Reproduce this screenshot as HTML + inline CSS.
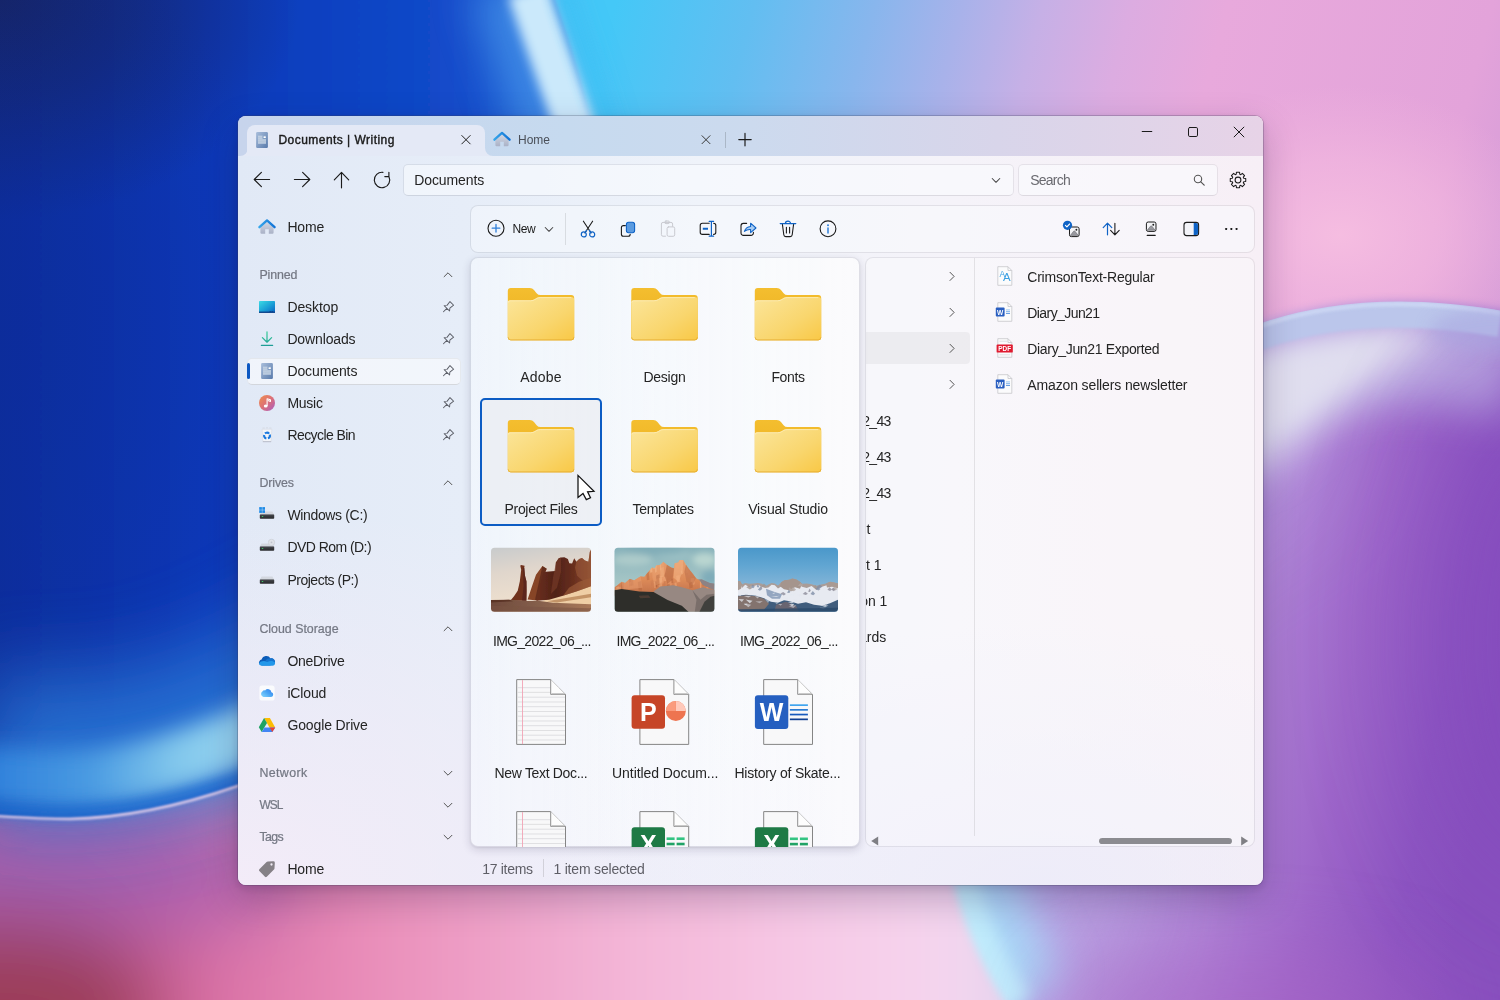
<!DOCTYPE html>
<html lang="en">
<head>
<meta charset="utf-8">
<title>Files</title>
<style>
*{box-sizing:border-box;margin:0;padding:0}
html,body{width:1500px;height:1000px;overflow:hidden;background:#1038b0;font-family:"Liberation Sans","DejaVu Sans",sans-serif;color:#1b1b1b}
#bg{position:absolute;left:0;top:0;width:1500px;height:1000px;display:block}

#win{will-change:transform;position:absolute;left:238px;top:116px;width:1025px;height:769px;border-radius:8px;overflow:hidden;
 background:
  linear-gradient(90deg,#e1e9f6 0%,#e6edf8 22%,#eff3fa 45%,#f5f3f9 70%,#f7eff6 100%);
 box-shadow:0 0 0 1px rgba(60,60,90,.26),0 14px 36px rgba(30,15,60,.26),0 3px 10px rgba(30,15,60,.14)}
#win .tint{position:absolute;left:0;top:0;width:1025px;height:769px;
 background:radial-gradient(ellipse 520px 260px at 78% 100%,rgba(236,235,249,.85),rgba(236,235,249,0) 100%),radial-gradient(ellipse 640px 380px at 0% 100%,rgba(244,236,248,.95),rgba(244,236,248,0) 100%)}
#titlebar{position:absolute;left:0;top:0;width:1025px;height:39.6px;
 background:linear-gradient(90deg,#c7d4ec 0%,#c6daef 32%,#ccdaee 50%,#d8d5ea 74%,#e7d3e7 100%)}
.abs{position:absolute}
.t14{font-size:14px;line-height:18px;white-space:nowrap;color:#242424}
.t13{font-size:13px;line-height:16px;white-space:nowrap;color:#1a1a1a}
.muted{color:#6f6f76}
#tab1{position:absolute;left:9px;top:9px;width:238px;height:31px;border-radius:8px 8px 0 0;background:#e4e9f6}
.card{background-clip:padding-box !important;position:absolute;background:rgba(250,253,255,.42);border:1px solid rgba(0,0,20,.075);border-radius:8px}
.field{background-clip:padding-box !important;position:absolute;background:rgba(252,254,255,.50);border:1px solid rgba(0,0,20,.065);border-bottom-color:rgba(0,0,20,.10);border-radius:5px}
svg{overflow:visible}
.t12{font-size:12px;line-height:16px;white-space:nowrap}
.t125{font-size:12.4px;line-height:16px;white-space:nowrap}
</style>
</head>
<body>
<!-- ===== WALLPAPER ===== -->
<svg id="bg" viewBox="0 0 1500 1000">
<defs>
  <linearGradient id="gTop" gradientUnits="userSpaceOnUse" x1="0" y1="0" x2="1500" y2="400">
    <stop offset="0.0100" stop-color="#44c8f7"/>
    <stop offset="0.3834" stop-color="#44c8f7"/>
    <stop offset="0.4700" stop-color="#62bef1"/>
    <stop offset="0.5450" stop-color="#88b6ed"/>
    <stop offset="0.6000" stop-color="#a8b2ea"/>
    <stop offset="0.6500" stop-color="#c6b0e6"/>
    <stop offset="0.7050" stop-color="#dcace1"/>
    <stop offset="0.7650" stop-color="#e8a9dc"/>
    <stop offset="0.9300" stop-color="#e3a3da"/>
    <stop offset="1" stop-color="#d29ad8"/>
  </linearGradient>
  <linearGradient id="gBlue" x1="0" y1="0" x2="1" y2="0">
    <stop offset="0" stop-color="#0d2c9a"/>
    <stop offset="0.35" stop-color="#0c38b8"/>
    <stop offset="0.7" stop-color="#1148c8"/>
    <stop offset="1" stop-color="#1a64d8"/>
  </linearGradient>
  <linearGradient id="gBottom" x1="0" y1="0" x2="1" y2="0">
    <stop offset="0" stop-color="#b24a7c"/>
    <stop offset="0.13" stop-color="#d0609a"/>
    <stop offset="0.27" stop-color="#e98cb8"/>
    <stop offset="0.42" stop-color="#f3b4d6"/>
    <stop offset="0.55" stop-color="#f7cce8"/>
    <stop offset="0.64" stop-color="#f3d8f0"/>
    <stop offset="0.70" stop-color="#b4c4ec"/>
    <stop offset="0.78" stop-color="#b088d6"/>
    <stop offset="0.88" stop-color="#9c5cc4"/>
    <stop offset="1" stop-color="#8a50c0"/>
  </linearGradient>
  <linearGradient id="gRight" gradientUnits="userSpaceOnUse" x1="1050" y1="600" x2="1500" y2="680">
    <stop offset="0" stop-color="#b6a6e6"/>
    <stop offset="0.22" stop-color="#b696dc"/>
    <stop offset="0.46" stop-color="#ae82d5"/>
    <stop offset="0.68" stop-color="#9d66c9"/>
    <stop offset="0.88" stop-color="#8c54c1"/>
    <stop offset="1" stop-color="#8850be"/>
  </linearGradient>
  <filter id="b2" filterUnits="userSpaceOnUse" x="-300" y="-300" width="2100" height="1600"><feGaussianBlur stdDeviation="1.6"/></filter>
  <radialGradient id="rgPink"><stop offset="0" stop-color="#f6bee1" stop-opacity="0.95"/><stop offset="0.5" stop-color="#f4bae0" stop-opacity="0.6"/><stop offset="1" stop-color="#f2b6de" stop-opacity="0"/></radialGradient>
  <radialGradient id="rgNavy"><stop offset="0" stop-color="#17235f" stop-opacity="0.9"/><stop offset="0.45" stop-color="#17235f" stop-opacity="0.55"/><stop offset="1" stop-color="#17235f" stop-opacity="0"/></radialGradient>
  <radialGradient id="rgLeft"><stop offset="0" stop-color="#0b2a98" stop-opacity="0.42"/><stop offset="0.5" stop-color="#0b2a98" stop-opacity="0.2"/><stop offset="1" stop-color="#0b2a98" stop-opacity="0"/></radialGradient>
  <filter id="b1" filterUnits="userSpaceOnUse" x="-300" y="-300" width="2100" height="1600"><feGaussianBlur stdDeviation="0.9"/></filter>
  <filter id="b12" filterUnits="userSpaceOnUse" x="-300" y="-300" width="2100" height="1600"><feGaussianBlur stdDeviation="11"/></filter>
  <filter id="b6" filterUnits="userSpaceOnUse" x="-300" y="-300" width="2100" height="1600"><feGaussianBlur stdDeviation="5.5"/></filter>
  <filter id="b8" filterUnits="userSpaceOnUse" x="-300" y="-300" width="2100" height="1600"><feGaussianBlur stdDeviation="8"/></filter>
  <filter id="b4" filterUnits="userSpaceOnUse" x="-300" y="-300" width="2100" height="1600"><feGaussianBlur stdDeviation="4"/></filter>
  <filter id="b20" filterUnits="userSpaceOnUse" x="-300" y="-300" width="2100" height="1600"><feGaussianBlur stdDeviation="20"/></filter>
  <filter id="b40" filterUnits="userSpaceOnUse" x="-300" y="-300" width="2100" height="1600"><feGaussianBlur stdDeviation="40"/></filter>
  <filter id="b70" filterUnits="userSpaceOnUse" x="-300" y="-300" width="2100" height="1600"><feGaussianBlur stdDeviation="70"/></filter>
</defs>
<!-- sky / top gradient -->
<rect x="0" y="0" width="1500" height="1000" fill="url(#gTop)"/>
<ellipse cx="1340" cy="235" rx="210" ry="150" fill="url(#rgPink)"/>
<!-- lower pink field -->
<g filter="url(#b40)">
  <rect x="-100" y="760" width="1700" height="340" fill="url(#gBottom)"/>
  <ellipse cx="60" cy="875" rx="240" ry="60" fill="#a65eae"/>
  <ellipse cx="0" cy="1010" rx="170" ry="90" fill="#9c3c58"/>
</g>
<!-- right purple glass body -->
<clipPath id="cpGlass"><path d="M1010,1010 C952,925 920,800 944,650 C976,470 1120,360 1263,322.5 C1320,303 1400,293 1500,310.5 V1010 Z"/></clipPath>
<mask id="mGlass" maskUnits="userSpaceOnUse" x="800" y="200" width="800" height="900"><path d="M1010,1010 C952,925 920,800 944,650 C976,470 1120,360 1263,322.5 C1320,303 1400,293 1500,310.5 L1600,310 V1100 H1010 Z" fill="#fff" filter="url(#b4)"/></mask>
<g mask="url(#mGlass)">
  <rect x="880" y="260" width="640" height="760" fill="url(#gRight)"/>
  <!-- inner left/bottom edge glow -->
  <path d="M1010,1010 C952,925 920,800 944,650 C976,470 1120,360 1263,322.5" fill="none" stroke="#b9a4e4" stroke-width="300" filter="url(#b70)" opacity="0.9"/>
  <path d="M1010,1010 C952,925 920,800 944,650" fill="none" stroke="#a9d4f6" stroke-width="130" filter="url(#b20)"/>
  <path d="M1010,1010 C952,925 920,800 944,650" fill="none" stroke="#bfeafb" stroke-width="50" filter="url(#b8)"/>
  <!-- soft light patch under the rim -->
  <path d="M1150,420 C1210,392 1263,376 1320,362 C1400,346 1450,348 1520,368" fill="none" stroke="#b8a6e0" stroke-width="110" filter="url(#b20)" opacity="0.9"/>
  <path d="M1200,372 C1270,345 1360,328 1470,332 C1410,352 1350,392 1300,440 C1270,470 1240,480 1200,470Z" fill="#dedcef" filter="url(#b20)"/>
  <path d="M1230,372 C1290,350 1350,336 1430,334 C1385,352 1340,380 1300,412 C1280,428 1250,436 1230,426Z" fill="#e0deef" filter="url(#b12)"/>
  <ellipse cx="1560" cy="640" rx="120" ry="260" fill="#8349bd" opacity="0.6" filter="url(#b70)"/>
  <ellipse cx="1250" cy="1010" rx="200" ry="60" fill="#a862c4" opacity="0.5" filter="url(#b40)"/>
</g>
<g clip-path="url(#cpGlass)">
  <!-- rim -->
  <path d="M1100,400 C1160,366 1210,346 1263,335.5 C1320,316 1400,306 1500,323.5" fill="none" stroke="#bbc6eb" stroke-width="27" filter="url(#b2)"/>
  <path d="M1100,390 C1160,356 1210,336 1263,325 C1320,305.5 1400,295.5 1500,313" fill="none" stroke="#cdd8f4" stroke-width="5" filter="url(#b2)" opacity="0.9"/>
  <ellipse cx="1500" cy="330" rx="70" ry="22" fill="#a9a6e0" opacity="0.55" filter="url(#b8)"/>
</g>
<!-- big blue sphere on the left -->
<linearGradient id="gGlow" gradientUnits="userSpaceOnUse" x1="-20" y1="0" x2="300" y2="0">
  <stop offset="0" stop-color="#2d7edb"/><stop offset="0.35" stop-color="#4a9be2"/><stop offset="0.62" stop-color="#83c8ec"/><stop offset="0.8" stop-color="#93d2f0"/><stop offset="1" stop-color="#7cc0ea"/>
</linearGradient>
<g>
  <path d="M-20,-20 L548,-20 C585,80 640,260 600,470 C560,640 420,740 238,786 C180,806 120,818 70,819 C40,819 10,817 -20,815Z" fill="url(#gBlue)" filter="url(#b2)"/>
  <ellipse cx="0" cy="0" rx="300" ry="220" fill="url(#rgNavy)"/>
  <ellipse cx="20" cy="330" rx="260" ry="440" fill="url(#rgLeft)"/>
  <!-- bottom glow -->
  <path d="M-20,760 C10,763 40,765 70,765 C120,764 175,751 228,730 C285,706 330,680 375,648" fill="none" stroke="#2a78d6" stroke-width="150" filter="url(#b40)" opacity="0.85" transform="translate(0,-12)"/>
  <path d="M-20,774 C10,777 40,779 70,779 C120,778 175,764 228,743 C285,720 330,694 375,662" fill="none" stroke="url(#gGlow)" stroke-width="58" filter="url(#b12)"/>
  <path d="M-20,815 C10,817 40,819 70,819 C120,818 180,806 238,786 C300,764 350,736 400,700" fill="none" stroke="#1f6fd2" stroke-width="12" filter="url(#b4)" opacity="0.55" transform="translate(-2,-7)"/>
  <path d="M-20,815 C10,817 40,819 70,819 C120,818 180,806 238,786 C300,764 350,736 400,700" fill="none" stroke="#ecd0ea" stroke-width="2.4" filter="url(#b1)" opacity="0.95"/>
  <!-- top rim light -->
  <path d="M508,-20 C530,50 552,110 572,180" fill="none" stroke="#4a96ea" stroke-width="80" filter="url(#b20)" opacity="0.75"/>
  <path d="M528,-10 C546,45 567,100 591,170" fill="none" stroke="#cbe9fb" stroke-width="42" filter="url(#b6)"/>
  <path d="M562,-10 C580,45 600,100 622,170" fill="none" stroke="#3cc8f6" stroke-width="14" filter="url(#b8)" opacity="0.8"/>
</g>
</svg>
<!-- ===== WINDOW ===== -->
<div id="win">
<div class="tint"></div>
<div id="titlebar"></div>
<svg width="0" height="0" style="position:absolute"><defs>
<linearGradient id="gHome" x1="0" y1="0" x2="0" y2="1"><stop offset="0" stop-color="#d9dee9"/><stop offset="1" stop-color="#a9b1c6"/></linearGradient>
<linearGradient id="gRoof" x1="0" y1="0" x2="1" y2="0"><stop offset="0" stop-color="#35a5ea"/><stop offset="1" stop-color="#1273d6"/></linearGradient>
<linearGradient id="gDesk" x1="0" y1="0" x2="1" y2="1"><stop offset="0" stop-color="#3bdbe4"/><stop offset="0.55" stop-color="#1a9fd6"/><stop offset="1" stop-color="#0a63c2"/></linearGradient>
<linearGradient id="gDoc" x1="0" y1="0" x2="1" y2="1"><stop offset="0" stop-color="#a9bedb"/><stop offset="1" stop-color="#587aab"/></linearGradient>
<linearGradient id="gMus" x1="0" y1="0" x2="1" y2="1"><stop offset="0" stop-color="#f0904c"/><stop offset="0.5" stop-color="#dc7078"/><stop offset="1" stop-color="#a85cc4"/></linearGradient>
<linearGradient id="gDl" x1="0" y1="0" x2="0" y2="1"><stop offset="0" stop-color="#3ccf9a"/><stop offset="1" stop-color="#1f9e96"/></linearGradient>
<linearGradient id="gOD" x1="0" y1="0" x2="1" y2="1"><stop offset="0" stop-color="#1a7fe0"/><stop offset="1" stop-color="#0a4fb0"/></linearGradient>
<linearGradient id="gIC" x1="0" y1="1" x2="1" y2="0.2"><stop offset="0" stop-color="#86d8fd"/><stop offset="0.6" stop-color="#49a4f4"/><stop offset="1" stop-color="#3a84ee"/></linearGradient>
<linearGradient id="gFold" x1="0" y1="0" x2="1" y2="1"><stop offset="0" stop-color="#fbe59a"/><stop offset="0.6" stop-color="#f9d66e"/><stop offset="1" stop-color="#f9c846"/></linearGradient>
<linearGradient id="gFoldB" x1="0" y1="0" x2="0" y2="1"><stop offset="0" stop-color="#f4be2f"/><stop offset="1" stop-color="#e9ad1c"/></linearGradient>
<linearGradient id="gDrive" x1="0" y1="0" x2="0" y2="1"><stop offset="0" stop-color="#6a6c72"/><stop offset="0.3" stop-color="#3a3c40"/><stop offset="1" stop-color="#2a2b2e"/></linearGradient>
</defs></svg>
<div id="tab1"></div>
<svg class="abs" style="left:1px;top:32px" width="9" height="8" viewBox="0 0 9 8"><path d="M9,0 V8 H1 A8,8 0 0 0 9,0Z" fill="#e4e9f6"/></svg>
<svg class="abs" style="left:247px;top:32px" width="9" height="8" viewBox="0 0 9 8"><path d="M0,0 V8 H8 A8,8 0 0 1 0,0Z" fill="#e4e9f6"/></svg>
<svg class="abs" style="left:12px;top:12px" width="24" height="24" viewBox="-12.00 -12.00 24 24" ><rect x="-5.9" y="-7.9" width="11.8" height="15.8" rx="1.2" fill="url(#gDoc)"/><rect x="-4.0" y="-4.4" width="8.0" height="8.2" fill="#c6d3e4" opacity="0.85"/><path d="M-4,-2.4 H4 M-4,-0.4 H4 M-4,1.6 H4" stroke="#b0c1d8" stroke-width="0.5"/><rect x="0.6" y="-4.4" width="3.4" height="3.2" fill="#7292bd"/><rect x="1.5" y="-3.7" width="2.3" height="1.7" fill="#fff"/></svg>
<div class="abs t12" style="left:40.40px;top:16.20px;font-weight:400;color:#1a1a1a;-webkit-text-stroke:0.4px #1a1a1a;letter-spacing:0.467px;font-size:12px">Documents | Writing</div>
<svg class="abs" style="left:216px;top:11px" width="24" height="24" viewBox="-12.00 -12.70 24 24" ><path d="M-4.2,-4.2 L4.2,4.2 M4.2,-4.2 L-4.2,4.2" fill="none" stroke="#222" stroke-width="1.0" stroke-linecap="round" stroke-linejoin="round" /></svg>
<svg class="abs" style="left:252px;top:11px" width="24" height="24" viewBox="-12.00 -12.50 24 24" ><path d="M-6.6,-1.6 L0,-7.2 L6.6,-1.6 V5.6 A1.2,1.2 0 0 1 5.4,6.8 H1.8 V2.2 H-1.8 V6.8 H-5.4 A1.2,1.2 0 0 1 -6.6,5.6 Z" fill="url(#gHome)"/><path d="M-7.6,0.2 L0,-6.6 L7.6,0.2" fill="none" stroke="url(#gRoof)" stroke-width="2.3" stroke-linecap="round" stroke-linejoin="round"/></svg>
<div class="abs t12" style="left:280.00px;top:16.20px;color:#4a4f58;letter-spacing:-0.003px;font-size:12px">Home</div>
<svg class="abs" style="left:456px;top:11px" width="24" height="24" viewBox="-12.00 -12.70 24 24" ><path d="M-4,-4 L4,4 M4,-4 L-4,4" fill="none" stroke="#3a3a3a" stroke-width="1.0" stroke-linecap="round" stroke-linejoin="round" /></svg>
<div class="abs" style="left:487px;top:16px;width:1px;height:16px;background:rgba(0,0,0,.16)"></div>
<svg class="abs" style="left:495px;top:11px" width="24" height="24" viewBox="-12.00 -12.60 24 24" ><path d="M-6.2,0 H6.2 M0,-6.2 V6.2" fill="none" stroke="#1b1b1b" stroke-width="1.2" stroke-linecap="round" stroke-linejoin="round" /></svg>
<svg class="abs" style="left:897px;top:3px" width="24" height="24" viewBox="-12.00 -12.50 24 24" ><path d="M-4.8,0 H4.8" fill="none" stroke="#1b1b1b" stroke-width="1.0" stroke-linecap="round" stroke-linejoin="round" /></svg>
<svg class="abs" style="left:943px;top:4px" width="24" height="24" viewBox="-12.00 -12.00 24 24" ><rect x="-4.5" y="-4.5" width="9" height="9" rx="1.3" fill="none" stroke="#1b1b1b" stroke-width="1.0" stroke-linecap="round" stroke-linejoin="round" /></svg>
<svg class="abs" style="left:989px;top:4px" width="24" height="24" viewBox="-12.00 -12.00 24 24" ><path d="M-4.9,-4.9 L4.9,4.9 M4.9,-4.9 L-4.9,4.9" fill="none" stroke="#1b1b1b" stroke-width="1.0" stroke-linecap="round" stroke-linejoin="round" /></svg>
<svg class="abs" style="left:12px;top:51px" width="24" height="24" viewBox="-12.00 -12.50 24 24" ><path d="M7.6,0 H-7.6 M-0.6,-7.2 L-7.8,0 L-0.6,7.2" fill="none" stroke="#1b1b1b" stroke-width="1.15" stroke-linecap="round" stroke-linejoin="round" /></svg>
<svg class="abs" style="left:52px;top:51px" width="24" height="24" viewBox="-12.00 -12.50 24 24" ><path d="M-7.6,0 H7.6 M0.6,-7.2 L7.8,0 L0.6,7.2" fill="none" stroke="#1b1b1b" stroke-width="1.15" stroke-linecap="round" stroke-linejoin="round" /></svg>
<svg class="abs" style="left:91px;top:52px" width="24" height="24" viewBox="-12.50 -12.00 24 24" ><path d="M0,7.8 V-7.4 M-7.2,-0.2 L0,-7.6 L7.2,-0.2" fill="none" stroke="#1b1b1b" stroke-width="1.15" stroke-linecap="round" stroke-linejoin="round" /></svg>
<svg class="abs" style="left:132px;top:52px" width="24" height="24" viewBox="-12.00 -12.00 24 24" ><path d="M0.9,-7.65 A7.7,7.7 0 1 0 6.9,-3.4 M6.9,-7.7 V-3.4 H2.8" fill="none" stroke="#1b1b1b" stroke-width="1.15" stroke-linecap="round" stroke-linejoin="round" /></svg>
<div class="field" style="left:165px;top:48px;width:611px;height:32px"></div>
<div class="abs t14" style="left:176.20px;top:55.30px;;letter-spacing:-0.101px;font-size:14px">Documents</div>
<svg class="abs" style="left:746px;top:52px" width="24" height="24" viewBox="-12.00 -12.40 24 24" ><path d="M-3.8,-1.9 L0,1.9 L3.8,-1.9" fill="none" stroke="#444" stroke-width="1.05" stroke-linecap="round" stroke-linejoin="round" /></svg>
<div class="field" style="left:780px;top:48px;width:200px;height:32px"></div>
<div class="abs t14" style="left:792.20px;top:55.30px;color:#6a6a70;letter-spacing:-0.752px;font-size:14px">Search</div>
<svg class="abs" style="left:949px;top:52px" width="24" height="24" viewBox="-12.00 -12.00 24 24" ><circle cx="-1" cy="-1" r="3.7" fill="none" stroke="#555" stroke-width="1.1" stroke-linecap="round" stroke-linejoin="round" /><path d="M1.8,1.8 L5.2,5.2" fill="none" stroke="#555" stroke-width="1.2" stroke-linecap="round" stroke-linejoin="round" /></svg>
<svg class="abs" style="left:988px;top:52px" width="24" height="24" viewBox="-12.00 -12.00 24 24" ><path d="M-1.77,-5.73 L-1.57,-7.74 L1.57,-7.74 L1.77,-5.73 L2.80,-5.31 L4.36,-6.58 L6.58,-4.36 L5.31,-2.80 L5.73,-1.77 L7.74,-1.57 L7.74,1.57 L5.73,1.77 L5.31,2.80 L6.58,4.36 L4.36,6.58 L2.80,5.31 L1.77,5.73 L1.57,7.74 L-1.57,7.74 L-1.77,5.73 L-2.80,5.31 L-4.36,6.58 L-6.58,4.36 L-5.31,2.80 L-5.73,1.77 L-7.74,1.57 L-7.74,-1.57 L-5.73,-1.77 L-5.31,-2.80 L-6.58,-4.36 L-4.36,-6.58 L-2.80,-5.31Z" fill="none" stroke="#1b1b1b" stroke-width="1.05" stroke-linecap="round" stroke-linejoin="round" /><circle cx="0" cy="0" r="2.9" fill="none" stroke="#1b1b1b" stroke-width="1.05" stroke-linecap="round" stroke-linejoin="round" /></svg>
<div class="card" style="left:232px;top:89px;width:785px;height:48px"></div>
<svg class="abs" style="left:246px;top:100px" width="24" height="24" viewBox="-12.00 -12.20 24 24" ><circle cx="0" cy="0" r="8" fill="none" stroke="#1b1b1b" stroke-width="1.1" stroke-linecap="round" stroke-linejoin="round" /><path d="M-3.8,0 H3.8 M0,-3.8 V3.8" fill="none" stroke="#2f7fd8" stroke-width="1.3" stroke-linecap="round" stroke-linejoin="round" /></svg>
<div class="abs t12" style="left:274.40px;top:105.20px;color:#1a1a1a;letter-spacing:-0.403px;font-size:12px">New</div>
<svg class="abs" style="left:299px;top:101px" width="24" height="24" viewBox="-12.00 -12.40 24 24" ><path d="M-3.8,-1.9 L0,1.9 L3.8,-1.9" fill="none" stroke="#444" stroke-width="1.05" stroke-linecap="round" stroke-linejoin="round" /></svg>
<div class="abs" style="left:327px;top:97px;width:1px;height:32px;background:rgba(0,0,0,.10)"></div>
<svg class="abs" style="left:338px;top:100px" width="24" height="24" viewBox="-12.00 -12.80 24 24" ><path d="M-4.6,-7.6 L3.0,4.0 M4.6,-7.6 L-3.0,4.0" fill="none" stroke="#1b1b1b" stroke-width="1.1" stroke-linecap="round" stroke-linejoin="round" /><path d="M-1.4,1.6 L-3.0,4.0 M1.4,1.6 L3.0,4.0" fill="none" stroke="#0f63c6" stroke-width="1.2" stroke-linecap="round" stroke-linejoin="round" /><circle cx="-4.2" cy="5.6" r="2.5" fill="none" stroke="#0f63c6" stroke-width="1.2" stroke-linecap="round" stroke-linejoin="round" /><circle cx="4.2" cy="5.6" r="2.5" fill="none" stroke="#0f63c6" stroke-width="1.2" stroke-linecap="round" stroke-linejoin="round" /></svg>
<svg class="abs" style="left:378px;top:100px" width="24" height="24" viewBox="-12.00 -12.80 24 24" ><path d="M-2.6,-3.2 H-4.6 A2,2 0 0 0 -6.6,-1.2 V5.4 A2,2 0 0 0 -4.6,7.4 H0.2 A2,2 0 0 0 2.2,5.4" fill="none" stroke="#1b1b1b" stroke-width="1.1" stroke-linecap="round" stroke-linejoin="round" /><rect x="-1.6" y="-6.6" width="8.2" height="10.6" rx="2.2" fill="#5b9be0" stroke="#0f63c6" stroke-width="1.1"/></svg>
<svg class="abs" style="left:418px;top:100px" width="24" height="24" viewBox="-12.00 -12.80 24 24" ><path d="M-2.5,7.4 H-5 A1.6,1.6 0 0 1 -6.6,5.8 V-4.8 A1.6,1.6 0 0 1 -5,-6.4 H3 A1.6,1.6 0 0 1 4.6,-4.8 V-2.4" fill="none" stroke="#c9cad0" stroke-width="1.0" stroke-linecap="round" stroke-linejoin="round" /><rect x="-3.2" y="-7.8" width="4.6" height="2.6" rx="1.2" fill="none" stroke="#c9cad0" stroke-width="1.0" stroke-linecap="round" stroke-linejoin="round" /><rect x="-0.9" y="-1.9" width="7.6" height="9.4" rx="1.5" fill="none" stroke="#c9cad0" stroke-width="1.0" stroke-linecap="round" stroke-linejoin="round" /></svg>
<svg class="abs" style="left:458px;top:100px" width="24" height="24" viewBox="-12.00 -12.80 24 24" ><path d="M1.2,-5.6 H-5.6 A2.2,2.2 0 0 0 -7.8,-3.4 V3.4 A2.2,2.2 0 0 0 -5.6,5.6 H1.2 M5.6,-5.6 A2.2,2.2 0 0 1 7.8,-3.4 V3.4 A2.2,2.2 0 0 1 5.6,5.6" fill="none" stroke="#1b1b1b" stroke-width="1.1" stroke-linecap="round" stroke-linejoin="round" /><path d="M-5.2,0 H0" fill="none" stroke="#0f63c6" stroke-width="2" stroke-linecap="butt"/><path d="M3.4,-7.4 V7.4 M1.2,-7.4 H5.6 M1.2,7.4 H5.6" fill="none" stroke="#0f63c6" stroke-width="1.2" stroke-linecap="round" stroke-linejoin="round" /></svg>
<svg class="abs" style="left:498px;top:100px" width="24" height="24" viewBox="-12.00 -12.80 24 24" ><path d="M-1.4,-5.4 H-4.6 A2.4,2.4 0 0 0 -7,-3 V4.2 A2.4,2.4 0 0 0 -4.6,6.6 H3 A2.4,2.4 0 0 0 5.4,4.2 V3.4" fill="none" stroke="#1b1b1b" stroke-width="1.1" stroke-linecap="round" stroke-linejoin="round" /><path d="M-3.6,2.6 C-2.6,-0.6 -0.2,-2.2 2.6,-2.4 V-5.6 L8.0,-0.8 L2.6,3.8 V0.8 C0.2,0.6 -1.8,1.2 -3.6,2.6 Z" fill="#a9cdf3" stroke="#0f63c6" stroke-width="1.05" stroke-linejoin="round"/></svg>
<svg class="abs" style="left:538px;top:100px" width="24" height="24" viewBox="-12.00 -12.80 24 24" ><path d="M-5.6,-4.6 L-4.2,6 A2,2 0 0 0 -2.2,7.8 H2.2 A2,2 0 0 0 4.2,6 L5.6,-4.6 M-1.6,-1.6 V4.2 M1.6,-1.6 V4.2" fill="none" stroke="#1b1b1b" stroke-width="1.1" stroke-linecap="round" stroke-linejoin="round" /><path d="M-7.8,-5.2 H7.8 M-2.6,-5.4 A2.6,2.2 0 0 1 2.6,-5.4" fill="none" stroke="#0f63c6" stroke-width="1.2" stroke-linecap="round" stroke-linejoin="round" /></svg>
<svg class="abs" style="left:578px;top:100px" width="24" height="24" viewBox="-12.00 -12.80 24 24" ><circle cx="0" cy="0" r="7.9" fill="none" stroke="#1b1b1b" stroke-width="1.1" stroke-linecap="round" stroke-linejoin="round" /><path d="M0,-0.8 V4.2" fill="none" stroke="#2f7fd8" stroke-width="1.5" stroke-linecap="round"/><circle cx="0" cy="-3.6" r="1" fill="#2f7fd8"/></svg>
<svg class="abs" style="left:821px;top:101px" width="24" height="24" viewBox="-12.20 -12.00 24 24" ><rect x="-1.7" y="-2.0" width="9.6" height="9.6" rx="1.8" fill="#f4f4f7" stroke="#1b1b1b" stroke-width="1.0"/><path d="M-0.7999999999999999,6.3999999999999995 L2.332,2.3200000000000003 Q3.0999999999999996,1.6479999999999997 3.8679999999999994,2.3200000000000003 L6.999999999999999,6.3999999999999995 Z" fill="#9a9aa0" stroke="#6a6a70" stroke-width="0.6"/><circle cx="5.199999999999999" cy="0.7000000000000002" r="0.95" fill="#1b1b1b"/><circle cx="-3.7" cy="-3.7" r="4.6" fill="#0f63c6"/><path d="M-5.8,-3.7 L-4.3,-2.2 L-1.6,-5.0" fill="none" stroke="#fff" stroke-width="1.1" stroke-linecap="round" stroke-linejoin="round" /></svg>
<svg class="abs" style="left:861px;top:101px" width="24" height="24" viewBox="-12.20 -12.00 24 24" ><path d="M-3.7,5.8 V-5.6 M-8.0,-1.4 L-3.7,-5.9 L0.6,-1.4" fill="none" stroke="#0f63c6" stroke-width="1.2" stroke-linecap="round" stroke-linejoin="round" /><path d="M3.7,-5.8 V5.6 M-0.6,1.4 L3.7,5.9 L8.0,1.4" fill="none" stroke="#1b1b1b" stroke-width="1.1" stroke-linecap="round" stroke-linejoin="round" /></svg>
<svg class="abs" style="left:901px;top:101px" width="24" height="24" viewBox="-12.20 -12.00 24 24" ><rect x="-4.8" y="-7.0" width="9.6" height="9.4" rx="1.8" fill="#f4f4f7" stroke="#1b1b1b" stroke-width="1.0"/><path d="M-3.9,1.2000000000000004 L-0.7679999999999998,-2.7699999999999996 Q0.0,-3.428 0.7679999999999998,-2.7699999999999996 L3.9,1.2000000000000004 Z" fill="#9a9aa0" stroke="#6a6a70" stroke-width="0.6"/><circle cx="2.0999999999999996" cy="-4.3" r="0.95" fill="#1b1b1b"/><path d="M-4,6.4 H4" fill="none" stroke="#1b1b1b" stroke-width="1.1" stroke-linecap="round" stroke-linejoin="round" /></svg>
<svg class="abs" style="left:941px;top:101px" width="24" height="24" viewBox="-12.30 -12.00 24 24" ><rect x="-7.3" y="-6.6" width="14.6" height="13.2" rx="2.6" fill="#f3f3f8" stroke="#1b1b1b" stroke-width="1.1"/><path d="M2.4,-6.1 H4.7 A2.2,2.2 0 0 1 6.8,-4 V4 A2.2,2.2 0 0 1 4.7,6.1 H2.4 Z" fill="#0f63c6"/></svg>
<svg class="abs" style="left:981px;top:101px" width="24" height="24" viewBox="-12.30 -12.00 24 24" ><rect x="-6.1000000000000005" y="-0.9" width="1.9" height="1.9" rx="0.4" fill="#1b1b1b"/><rect x="-0.9" y="-0.9" width="1.9" height="1.9" rx="0.4" fill="#1b1b1b"/><rect x="4.3" y="-0.9" width="1.9" height="1.9" rx="0.4" fill="#1b1b1b"/></svg>
<svg class="abs" style="left:17px;top:99px" width="24" height="24" viewBox="-12.00 -12.00 24 24" ><path d="M-6.6,-1.6 L0,-7.2 L6.6,-1.6 V5.6 A1.2,1.2 0 0 1 5.4,6.8 H1.8 V2.2 H-1.8 V6.8 H-5.4 A1.2,1.2 0 0 1 -6.6,5.6 Z" fill="url(#gHome)"/><path d="M-7.6,0.2 L0,-6.6 L7.6,0.2" fill="none" stroke="url(#gRoof)" stroke-width="2.3" stroke-linecap="round" stroke-linejoin="round"/></svg>
<div class="abs t14" style="left:49.40px;top:102.20px;;letter-spacing:-0.182px;font-size:14px">Home</div>
<div class="abs t125" style="left:21.40px;top:150.60px;color:#747884;-webkit-text-stroke:0.22px #747884;letter-spacing:-0.122px;font-size:12.4px">Pinned</div>
<svg class="abs" style="left:198px;top:146px" width="24" height="24" viewBox="-12.00 -12.80 24 24" ><path d="M-3.9,1.9 L0,-2.0 L3.9,1.9" fill="none" stroke="#555" stroke-width="1.0" stroke-linecap="round" stroke-linejoin="round" /></svg>
<svg class="abs" style="left:17px;top:179px" width="24" height="24" viewBox="-12.00 -12.00 24 24" ><rect x="-8" y="-6" width="16" height="11.6" rx="0.8" fill="url(#gDesk)"/><rect x="-8" y="4.6" width="16" height="1.3" fill="#0b3d86"/><rect x="2.6" y="4.0" width="1.2" height="0.9" fill="#0b3d86"/><rect x="4.6" y="4.0" width="1.2" height="0.9" fill="#0b3d86"/></svg>
<div class="abs t14" style="left:49.40px;top:182.20px;;letter-spacing:-0.093px;font-size:14px">Desktop</div>
<svg class="abs" style="left:198px;top:179px" width="24" height="24" viewBox="-12.00 -12.20 24 24" ><g transform="rotate(45)"><path d="M-2.6,-5.4 H2.6 L2.0,-0.6 L3.8,1.6 H-3.8 L-2.0,-0.6 Z M0,1.6 V6.4" fill="none" stroke="#5a5d66" stroke-width="0.95" stroke-linejoin="round" stroke-linecap="round"/></g></svg>
<svg class="abs" style="left:17px;top:211px" width="24" height="24" viewBox="-12.00 -12.00 24 24" ><path d="M0,-7.2 V3 M-4.6,-1.4 L0,3.2 L4.6,-1.4 M-5.6,6.4 H5.6" fill="none" stroke="url(#gDl)" stroke-width="1.25" stroke-linecap="round" stroke-linejoin="round"/></svg>
<div class="abs t14" style="left:49.40px;top:214.20px;;letter-spacing:-0.133px;font-size:14px">Downloads</div>
<svg class="abs" style="left:198px;top:211px" width="24" height="24" viewBox="-12.00 -12.20 24 24" ><g transform="rotate(45)"><path d="M-2.6,-5.4 H2.6 L2.0,-0.6 L3.8,1.6 H-3.8 L-2.0,-0.6 Z M0,1.6 V6.4" fill="none" stroke="#5a5d66" stroke-width="0.95" stroke-linejoin="round" stroke-linecap="round"/></g></svg>
<div class="abs" style="left:8.5px;top:241.5px;width:214px;height:27px;border-radius:5px;background:rgba(255,255,255,.50);border:1px solid rgba(0,0,0,.055);border-bottom-color:rgba(0,0,0,.12)"></div>
<div class="abs" style="left:9px;top:247px;width:3px;height:16px;border-radius:1.5px;background:#0b57c2"></div>
<svg class="abs" style="left:17px;top:243px" width="24" height="24" viewBox="-12.00 -12.00 24 24" ><rect x="-5.9" y="-7.9" width="11.8" height="15.8" rx="1.2" fill="url(#gDoc)"/><rect x="-4.0" y="-4.4" width="8.0" height="8.2" fill="#c6d3e4" opacity="0.85"/><path d="M-4,-2.4 H4 M-4,-0.4 H4 M-4,1.6 H4" stroke="#b0c1d8" stroke-width="0.5"/><rect x="0.6" y="-4.4" width="3.4" height="3.2" fill="#7292bd"/><rect x="1.5" y="-3.7" width="2.3" height="1.7" fill="#fff"/></svg>
<div class="abs t14" style="left:49.40px;top:246.20px;;letter-spacing:-0.101px;font-size:14px">Documents</div>
<svg class="abs" style="left:198px;top:243px" width="24" height="24" viewBox="-12.00 -12.20 24 24" ><g transform="rotate(45)"><path d="M-2.6,-5.4 H2.6 L2.0,-0.6 L3.8,1.6 H-3.8 L-2.0,-0.6 Z M0,1.6 V6.4" fill="none" stroke="#5a5d66" stroke-width="0.95" stroke-linejoin="round" stroke-linecap="round"/></g></svg>
<svg class="abs" style="left:17px;top:275px" width="24" height="24" viewBox="-12.00 -12.00 24 24" ><circle cx="0" cy="0" r="8" fill="url(#gMus)"/><ellipse cx="-1.3" cy="3.0" rx="1.9" ry="1.6" fill="#fff"/><path d="M0.1,3 V-4.2 L3.4,-3.2 V-1.6 L1.0,-2.4" fill="none" stroke="#fff" stroke-width="1.1" stroke-linejoin="round"/></svg>
<div class="abs t14" style="left:49.40px;top:278.20px;;letter-spacing:-0.24px;font-size:14px">Music</div>
<svg class="abs" style="left:198px;top:275px" width="24" height="24" viewBox="-12.00 -12.20 24 24" ><g transform="rotate(45)"><path d="M-2.6,-5.4 H2.6 L2.0,-0.6 L3.8,1.6 H-3.8 L-2.0,-0.6 Z M0,1.6 V6.4" fill="none" stroke="#5a5d66" stroke-width="0.95" stroke-linejoin="round" stroke-linecap="round"/></g></svg>
<svg class="abs" style="left:17px;top:307px" width="24" height="24" viewBox="-12.00 -12.00 24 24" ><path d="M-4.9,-5.8 H4.9 L4.1,6.6 H-4.1 Z" fill="#f2f4f8" stroke="#d6dae2" stroke-width="0.6"/><path d="M-4.1,6.7 H4.1" stroke="#b4b9c6" stroke-width="0.9"/><path d="M-4.4,-7 H-2.2 M-1,-7.2 H1 M2.2,-7 H4.4" stroke="#d3d7e0" stroke-width="0.8"/><circle cx="0" cy="0.6" r="2.9" fill="none" stroke="#1b79de" stroke-width="2.1" stroke-dasharray="4.5 1.57" transform="rotate(-20 0 0.6)"/></svg>
<div class="abs t14" style="left:49.40px;top:310.20px;;letter-spacing:-0.572px;font-size:14px">Recycle Bin</div>
<svg class="abs" style="left:198px;top:307px" width="24" height="24" viewBox="-12.00 -12.20 24 24" ><g transform="rotate(45)"><path d="M-2.6,-5.4 H2.6 L2.0,-0.6 L3.8,1.6 H-3.8 L-2.0,-0.6 Z M0,1.6 V6.4" fill="none" stroke="#5a5d66" stroke-width="0.95" stroke-linejoin="round" stroke-linecap="round"/></g></svg>
<div class="abs t125" style="left:21.40px;top:358.60px;color:#747884;-webkit-text-stroke:0.22px #747884;letter-spacing:-0.107px;font-size:12.4px">Drives</div>
<svg class="abs" style="left:198px;top:354px" width="24" height="24" viewBox="-12.00 -12.80 24 24" ><path d="M-3.9,1.9 L0,-2.0 L3.9,1.9" fill="none" stroke="#555" stroke-width="1.0" stroke-linecap="round" stroke-linejoin="round" /></svg>
<svg class="abs" style="left:17px;top:387px" width="24" height="24" viewBox="-12.00 -12.00 24 24" ><path d="M-5.4,-3.4 H5.4 L7.1,-0.4 H-7.1 Z" fill="#d3d7df"/><rect x="-7.2" y="-0.7" width="14.4" height="4.5" rx="0.8" fill="url(#gDrive)"/><rect x="-5.2" y="1.1" width="1.4" height="0.9" fill="#3fd66b"/><rect x="-7.8" y="-7.9" width="2.7" height="2.7" fill="#1f8be6"/><rect x="-4.7" y="-7.9" width="2.7" height="2.7" fill="#1f8be6"/><rect x="-7.8" y="-4.8" width="2.7" height="2.7" fill="#1f8be6"/><rect x="-4.7" y="-4.8" width="2.7" height="2.7" fill="#1f8be6"/></svg>
<div class="abs t14" style="left:49.40px;top:390.20px;;letter-spacing:-0.346px;font-size:14px">Windows (C:)</div>
<svg class="abs" style="left:17px;top:419px" width="24" height="24" viewBox="-12.00 -12.00 24 24" ><path d="M-5.4,-3.4 H5.4 L7.1,-0.4 H-7.1 Z" fill="#d3d7df"/><rect x="-7.2" y="-0.7" width="14.4" height="4.5" rx="0.8" fill="url(#gDrive)"/><rect x="-5.2" y="1.1" width="1.4" height="0.9" fill="#3fd66b"/><circle cx="4.5" cy="-4.6" r="3.2" fill="#dfe2e8" stroke="#c2c6ce" stroke-width="0.5"/><circle cx="4.5" cy="-4.6" r="0.9" fill="#c2c6ce"/></svg>
<div class="abs t14" style="left:49.40px;top:422.20px;;letter-spacing:-0.547px;font-size:14px">DVD Rom (D:)</div>
<svg class="abs" style="left:17px;top:452px" width="24" height="24" viewBox="-12.00 -12.00 24 24" ><path d="M-5.4,-3.4 H5.4 L7.1,-0.4 H-7.1 Z" fill="#d3d7df"/><rect x="-7.2" y="-0.7" width="14.4" height="4.5" rx="0.8" fill="url(#gDrive)"/><rect x="-5.2" y="1.1" width="1.4" height="0.9" fill="#3fd66b"/></svg>
<div class="abs t14" style="left:49.40px;top:455.20px;;letter-spacing:-0.485px;font-size:14px">Projects (P:)</div>
<div class="abs t125" style="left:21.40px;top:504.60px;color:#747884;-webkit-text-stroke:0.22px #747884;letter-spacing:-0.006px;font-size:12.4px">Cloud Storage</div>
<svg class="abs" style="left:198px;top:500px" width="24" height="24" viewBox="-12.00 -12.80 24 24" ><path d="M-3.9,1.9 L0,-2.0 L3.9,1.9" fill="none" stroke="#555" stroke-width="1.0" stroke-linecap="round" stroke-linejoin="round" /></svg>
<svg class="abs" style="left:17px;top:533px" width="24" height="24" viewBox="-12.00 -12.00 24 24" ><path d="M-7.9,3.0 A3.4,3.4 0 0 1 -5.4,-1.4 A4.9,4.9 0 0 1 3.5,-2.6 A3.9,3.9 0 0 1 8.0,2.2 L3,4.4 H-5Z" fill="#0b5cb8"/><path d="M-1.5,-0.6 A4.9,4.9 0 0 1 3.5,-2.6 A3.9,3.9 0 0 1 8.0,2.0 L2,3.4Z" fill="#1474cf"/><path d="M-8.1,2.3 C-6,-0.3 -2.4,-0.4 0.4,1.1 C3,-0.6 6.2,-0.4 8.1,1.8 A2.9,2.9 0 0 1 5.3,4.7 H-5.5 A2.6,2.6 0 0 1 -8.1,2.3Z" fill="#2398ea"/></svg>
<div class="abs t14" style="left:49.40px;top:536.20px;;letter-spacing:-0.247px;font-size:14px">OneDrive</div>
<svg class="abs" style="left:17px;top:565px" width="24" height="24" viewBox="-12.00 -12.00 24 24" ><rect x="-7.6" y="-7.6" width="15.2" height="15.2" rx="2.6" fill="#fafbfd"/><path d="M-3.6,3.9 A2.9,2.9 0 0 1 -4.6,-1.4 A2.4,2.4 0 0 1 -1.9,-2.6 A3.6,3.6 0 0 1 4.4,-0.8 A2.4,2.4 0 0 1 4.2,3.9 Z" fill="url(#gIC)"/></svg>
<div class="abs t14" style="left:49.40px;top:568.20px;;letter-spacing:-0.158px;font-size:14px">iCloud</div>
<svg class="abs" style="left:17px;top:597px" width="24" height="24" viewBox="-12.00 -12.00 24 24" ><path d="M-2.9,-7 H2.9 L8.2,2.4 H2.5 Z" fill="#fbbc04"/><path d="M-2.9,-7 L0,-1.9 L-5.3,7 L-8.2,2.2 Z" fill="#1ea362"/><path d="M-5.3,7 L-2.5,2.4 H8.2 L5.3,7 Z" fill="#4285f4"/><path d="M2.5,2.4 H8.2 L5.3,7 L3.8,4.6Z" fill="#ea4335"/></svg>
<div class="abs t14" style="left:49.40px;top:600.20px;;letter-spacing:-0.119px;font-size:14px">Google Drive</div>
<div class="abs t125" style="left:21.40px;top:648.60px;color:#747884;-webkit-text-stroke:0.22px #747884;letter-spacing:0.387px;font-size:12.4px">Network</div>
<svg class="abs" style="left:198px;top:645px" width="24" height="24" viewBox="-12.00 -12.20 24 24" ><path d="M-3.9,-1.9 L0,2.0 L3.9,-1.9" fill="none" stroke="#555" stroke-width="1.0" stroke-linecap="round" stroke-linejoin="round" /></svg>
<div class="abs t125" style="left:21.40px;top:680.60px;color:#747884;-webkit-text-stroke:0.22px #747884;letter-spacing:-0.844px;font-size:11.9px">WSL</div>
<svg class="abs" style="left:198px;top:677px" width="24" height="24" viewBox="-12.00 -12.20 24 24" ><path d="M-3.9,-1.9 L0,2.0 L3.9,-1.9" fill="none" stroke="#555" stroke-width="1.0" stroke-linecap="round" stroke-linejoin="round" /></svg>
<div class="abs t125" style="left:21.40px;top:712.60px;color:#747884;-webkit-text-stroke:0.22px #747884;letter-spacing:-0.598px;font-size:12.4px">Tags</div>
<svg class="abs" style="left:198px;top:709px" width="24" height="24" viewBox="-12.00 -12.20 24 24" ><path d="M-3.9,-1.9 L0,2.0 L3.9,-1.9" fill="none" stroke="#555" stroke-width="1.0" stroke-linecap="round" stroke-linejoin="round" /></svg>
<svg class="abs" style="left:17px;top:741px" width="24" height="24" viewBox="-12.00 -12.00 24 24" ><path d="M-7.4,1.2 L-0.6,-5.6 A1.6,1.6 0 0 1 0.6,-6.1 L5.8,-6.4 A1.4,1.4 0 0 1 7.2,-5.0 L6.9,0.2 A1.6,1.6 0 0 1 6.4,1.4 L-0.4,8.2 A1.2,1.2 0 0 1 -2.1,8.2 L-7.4,2.9 A1.2,1.2 0 0 1 -7.4,1.2Z" fill="#858186" transform="translate(0.2,-1) scale(1.06)"/><circle cx="4.5" cy="-4.5" r="1.15" fill="#f1ecf6"/></svg>
<div class="abs t14" style="left:49.40px;top:744.20px;;letter-spacing:-0.182px;font-size:14px">Home</div>
<div class="abs t14" style="left:244.30px;top:744.00px;color:#5e5e66;letter-spacing:-0.316px;font-size:14px">17 items</div>
<div class="abs" style="left:305px;top:743px;width:1px;height:18px;background:rgba(0,0,0,.12)"></div>
<div class="abs t14" style="left:315.40px;top:744.00px;color:#5e5e66;letter-spacing:-0.19px;font-size:14px">1 item selected</div>
<div class="abs" style="left:232px;top:141px;width:390px;height:590px;border-radius:8px;background:linear-gradient(90deg,rgba(248,252,255,.52),rgba(255,255,255,.66));border:1px solid rgba(0,0,20,.085);background-clip:padding-box;box-shadow:0 3px 8px rgba(40,30,70,.16),0 1px 2px rgba(0,0,0,.06);overflow:hidden" id="lp">
</div>
<div class="abs" style="left:232px;top:141px;width:390px;height:590px;border-radius:8px;overflow:hidden">
<div class="abs" style="left:-232px;top:-141px;width:1025px;height:769px">
<svg class="abs" style="left:267px;top:169px;" width="72" height="58" viewBox="-2.80 -2.90 72 58"><path d="M0,3 Q0,0 3,0 H22 Q24.6,0 26.2,2 L28.8,5.3 Q30.3,7.2 32.8,7.2 H63.4 Q66.4,7.2 66.4,10.2 V49.4 Q66.4,52.4 63.4,52.4 H3 Q0,52.4 0,49.4 Z" fill="url(#gFoldB)"/><path d="M0,14.6 Q0,12.4 2.2,12.4 H22.6 Q25.2,12.4 27.2,11.0 L28.6,10.1 Q30.2,9.2 32.4,9.2 H63.4 Q66.4,9.2 66.4,12.2 V49.4 Q66.4,52.4 63.4,52.4 H3 Q0,52.4 0,49.4 Z" fill="url(#gFold)"/><path d="M0.4,49.4 Q0.4,52 3,52 H63.4 Q66,52 66,49.4" fill="none" stroke="#e3a92c" stroke-width="0.9" opacity="0.85"/><path d="M0.5,14.6 Q0.5,12.9 2.2,12.9 H22.6 Q25.4,12.9 27.4,11.5 L28.8,10.6 Q30.3,9.7 32.4,9.7 H63.4" fill="none" stroke="#fdf0bf" stroke-width="0.8" opacity="0.9"/></svg>
<div class="abs t14" style="left:233.00px;width:140px;text-align:center;top:252.20px;;letter-spacing:0.179px;font-size:14px">Adobe</div>
<svg class="abs" style="left:391px;top:169px;" width="72" height="58" viewBox="-2.30 -2.90 72 58"><path d="M0,3 Q0,0 3,0 H22 Q24.6,0 26.2,2 L28.8,5.3 Q30.3,7.2 32.8,7.2 H63.4 Q66.4,7.2 66.4,10.2 V49.4 Q66.4,52.4 63.4,52.4 H3 Q0,52.4 0,49.4 Z" fill="url(#gFoldB)"/><path d="M0,14.6 Q0,12.4 2.2,12.4 H22.6 Q25.2,12.4 27.2,11.0 L28.6,10.1 Q30.2,9.2 32.4,9.2 H63.4 Q66.4,9.2 66.4,12.2 V49.4 Q66.4,52.4 63.4,52.4 H3 Q0,52.4 0,49.4 Z" fill="url(#gFold)"/><path d="M0.4,49.4 Q0.4,52 3,52 H63.4 Q66,52 66,49.4" fill="none" stroke="#e3a92c" stroke-width="0.9" opacity="0.85"/><path d="M0.5,14.6 Q0.5,12.9 2.2,12.9 H22.6 Q25.4,12.9 27.4,11.5 L28.8,10.6 Q30.3,9.7 32.4,9.7 H63.4" fill="none" stroke="#fdf0bf" stroke-width="0.8" opacity="0.9"/></svg>
<div class="abs t14" style="left:356.50px;width:140px;text-align:center;top:252.20px;;letter-spacing:-0.256px;font-size:14px">Design</div>
<svg class="abs" style="left:514px;top:169px;" width="72" height="58" viewBox="-2.80 -2.90 72 58"><path d="M0,3 Q0,0 3,0 H22 Q24.6,0 26.2,2 L28.8,5.3 Q30.3,7.2 32.8,7.2 H63.4 Q66.4,7.2 66.4,10.2 V49.4 Q66.4,52.4 63.4,52.4 H3 Q0,52.4 0,49.4 Z" fill="url(#gFoldB)"/><path d="M0,14.6 Q0,12.4 2.2,12.4 H22.6 Q25.2,12.4 27.2,11.0 L28.6,10.1 Q30.2,9.2 32.4,9.2 H63.4 Q66.4,9.2 66.4,12.2 V49.4 Q66.4,52.4 63.4,52.4 H3 Q0,52.4 0,49.4 Z" fill="url(#gFold)"/><path d="M0.4,49.4 Q0.4,52 3,52 H63.4 Q66,52 66,49.4" fill="none" stroke="#e3a92c" stroke-width="0.9" opacity="0.85"/><path d="M0.5,14.6 Q0.5,12.9 2.2,12.9 H22.6 Q25.4,12.9 27.4,11.5 L28.8,10.6 Q30.3,9.7 32.4,9.7 H63.4" fill="none" stroke="#fdf0bf" stroke-width="0.8" opacity="0.9"/></svg>
<div class="abs t14" style="left:480.00px;width:140px;text-align:center;top:252.20px;;letter-spacing:-0.378px;font-size:14px">Fonts</div>
<div class="abs" style="left:241.60000000000002px;top:282.4px;width:122px;height:127.4px;border:2px solid #0c5cc4;border-radius:5px;background:rgba(234,235,240,.6)"></div>
<svg class="abs" style="left:267px;top:301px;" width="72" height="58" viewBox="-2.80 -2.90 72 58"><path d="M0,3 Q0,0 3,0 H22 Q24.6,0 26.2,2 L28.8,5.3 Q30.3,7.2 32.8,7.2 H63.4 Q66.4,7.2 66.4,10.2 V49.4 Q66.4,52.4 63.4,52.4 H3 Q0,52.4 0,49.4 Z" fill="url(#gFoldB)"/><path d="M0,14.6 Q0,12.4 2.2,12.4 H22.6 Q25.2,12.4 27.2,11.0 L28.6,10.1 Q30.2,9.2 32.4,9.2 H63.4 Q66.4,9.2 66.4,12.2 V49.4 Q66.4,52.4 63.4,52.4 H3 Q0,52.4 0,49.4 Z" fill="url(#gFold)"/><path d="M0.4,49.4 Q0.4,52 3,52 H63.4 Q66,52 66,49.4" fill="none" stroke="#e3a92c" stroke-width="0.9" opacity="0.85"/><path d="M0.5,14.6 Q0.5,12.9 2.2,12.9 H22.6 Q25.4,12.9 27.4,11.5 L28.8,10.6 Q30.3,9.7 32.4,9.7 H63.4" fill="none" stroke="#fdf0bf" stroke-width="0.8" opacity="0.9"/></svg>
<div class="abs t14" style="left:233.00px;width:140px;text-align:center;top:384.20px;;letter-spacing:-0.31px;font-size:14px">Project Files</div>
<svg class="abs" style="left:391px;top:301px;" width="72" height="58" viewBox="-2.30 -2.90 72 58"><path d="M0,3 Q0,0 3,0 H22 Q24.6,0 26.2,2 L28.8,5.3 Q30.3,7.2 32.8,7.2 H63.4 Q66.4,7.2 66.4,10.2 V49.4 Q66.4,52.4 63.4,52.4 H3 Q0,52.4 0,49.4 Z" fill="url(#gFoldB)"/><path d="M0,14.6 Q0,12.4 2.2,12.4 H22.6 Q25.2,12.4 27.2,11.0 L28.6,10.1 Q30.2,9.2 32.4,9.2 H63.4 Q66.4,9.2 66.4,12.2 V49.4 Q66.4,52.4 63.4,52.4 H3 Q0,52.4 0,49.4 Z" fill="url(#gFold)"/><path d="M0.4,49.4 Q0.4,52 3,52 H63.4 Q66,52 66,49.4" fill="none" stroke="#e3a92c" stroke-width="0.9" opacity="0.85"/><path d="M0.5,14.6 Q0.5,12.9 2.2,12.9 H22.6 Q25.4,12.9 27.4,11.5 L28.8,10.6 Q30.3,9.7 32.4,9.7 H63.4" fill="none" stroke="#fdf0bf" stroke-width="0.8" opacity="0.9"/></svg>
<div class="abs t14" style="left:355.10px;width:140px;text-align:center;top:384.20px;;letter-spacing:-0.276px;font-size:14px">Templates</div>
<svg class="abs" style="left:514px;top:301px;" width="72" height="58" viewBox="-2.80 -2.90 72 58"><path d="M0,3 Q0,0 3,0 H22 Q24.6,0 26.2,2 L28.8,5.3 Q30.3,7.2 32.8,7.2 H63.4 Q66.4,7.2 66.4,10.2 V49.4 Q66.4,52.4 63.4,52.4 H3 Q0,52.4 0,49.4 Z" fill="url(#gFoldB)"/><path d="M0,14.6 Q0,12.4 2.2,12.4 H22.6 Q25.2,12.4 27.2,11.0 L28.6,10.1 Q30.2,9.2 32.4,9.2 H63.4 Q66.4,9.2 66.4,12.2 V49.4 Q66.4,52.4 63.4,52.4 H3 Q0,52.4 0,49.4 Z" fill="url(#gFold)"/><path d="M0.4,49.4 Q0.4,52 3,52 H63.4 Q66,52 66,49.4" fill="none" stroke="#e3a92c" stroke-width="0.9" opacity="0.85"/><path d="M0.5,14.6 Q0.5,12.9 2.2,12.9 H22.6 Q25.4,12.9 27.4,11.5 L28.8,10.6 Q30.3,9.7 32.4,9.7 H63.4" fill="none" stroke="#fdf0bf" stroke-width="0.8" opacity="0.9"/></svg>
<div class="abs t14" style="left:480.00px;width:140px;text-align:center;top:384.20px;;letter-spacing:-0.139px;font-size:14px">Visual Studio</div>
<svg class="abs" style="left:251px;top:429px;" width="105" height="69" viewBox="-2.00 -2.80 105 69"><clipPath id="tc1"><rect width="100" height="64" rx="3.5"/></clipPath><g clip-path="url(#tc1)"><defs><linearGradient id="t1s" x1="0" y1="0" x2="0.25" y2="1"><stop offset="0" stop-color="#c6cacc"/><stop offset="0.4" stop-color="#e0d6cc"/><stop offset="1" stop-color="#f3e3cf"/></linearGradient><linearGradient id="t1r" x1="0" y1="0" x2="1" y2="0"><stop offset="0" stop-color="#6b2f1d"/><stop offset="0.35" stop-color="#4f2117"/><stop offset="0.7" stop-color="#6a301f"/><stop offset="1" stop-color="#8a4a30"/></linearGradient><linearGradient id="t1g" x1="0" y1="0" x2="1" y2="0"><stop offset="0" stop-color="#6f4a3c"/><stop offset="0.5" stop-color="#86604c"/><stop offset="1" stop-color="#a9795a"/></linearGradient><filter id="tb"><feGaussianBlur stdDeviation="0.45"/></filter></defs><rect x="-2" y="-2" width="104" height="68" fill="url(#t1s)"/><g filter="url(#tb)"><path d="M44,56 L100,36 V60 L40,60Z" fill="#efcfa6"/><path d="M56,53.4 L100,46 V49.5 L66,54.8Z" fill="#b98659" opacity="0.8"/><polygon points="19.3,52.9 23.0,48.5 26.7,43.0 28.8,33.8 30.2,22.0 29.3,18.0 30.0,17.3 33.6,18.0 33.2,20.3 34.0,28.0 35.5,33.8 35.6,43.0 35.4,52.9" fill="#6f321e"/><path d="M32,20 L33.4,20.3 L34,28 L35.5,33.8 L35.6,43 L35.4,52.9 L31,52.9 L32.6,38Z" fill="#52241a" opacity="0.7"/><polygon points="36.6,51.6 40.5,40.0 45.0,27.0 51.4,18.2 55.7,21.0 52.0,30.0 48.5,44.0 46.5,52.6" fill="#874428"/><path d="M51.4,18.2 L55.7,21 L52,30 L48.5,44 L46.5,52.6 L44,52 L48,34Z" fill="#5a281b" opacity="0.75"/><polygon points="45.5,52.9 48.5,38.0 52.2,24.2 58.0,23.6 64.2,23.2 64.9,14.7 67.7,10.5 70.0,9.8 73.4,9.4 76.9,11.2 78.3,15.4 81.1,15.8 83.2,10.5 85.4,14.0 88.2,11.2 91.0,10.1 93.9,12.6 97.4,14.0 98.8,4.1 100.0,2.0 100.0,38.5 86.0,43.5 72.0,48.0 58.0,52.0" fill="url(#t1r)"/><path d="M85.4,14 L88.2,11.2 L91,10.1 L93.9,12.6 L97.4,14 L98.8,4.1 L100,2 V30 L92,33 L86,28 L84,20Z" fill="#9a5a38" opacity="0.6"/><path d="M64.9,14.7 L67.7,10.5 L70,9.8 L70,24 L66,40 L60,46 L62,30Z" fill="#7c3c26" opacity="0.6"/><path d="M72,48 L86,43.5 L100,38.5 V30 L88,34 L78,40Z" fill="#a8663e" opacity="0.55"/><path d="M0,52.6 L19,52 L36,53.2 L47,53 L62,55 L100,56.5 V66 H0Z" fill="url(#t1g)"/><path d="M0,52.2 L18,51.9 L22,53.4 L0,54.6Z" fill="#5b3427"/><path d="M0,58 L100,60.5 V66 H0Z" fill="#7a5444" opacity="0.55"/></g></g></svg>
<div class="abs t14" style="left:233.80px;width:140px;text-align:center;top:516.20px;;letter-spacing:-0.699px;font-size:14px">IMG_2022_06_...</div>
<svg class="abs" style="left:374px;top:429px;" width="105" height="69" viewBox="-2.50 -2.80 105 69"><clipPath id="tc2"><rect width="100" height="64" rx="3.5"/></clipPath><g clip-path="url(#tc2)"><defs><linearGradient id="t2s" x1="0" y1="0" x2="0" y2="1"><stop offset="0" stop-color="#86b1ba"/><stop offset="0.5" stop-color="#a3c4c5"/><stop offset="1" stop-color="#bad3cc"/></linearGradient><linearGradient id="t2m" x1="0" y1="0" x2="0" y2="1"><stop offset="0" stop-color="#e79f6f"/><stop offset="0.55" stop-color="#dc8a58"/><stop offset="1" stop-color="#c0704a"/></linearGradient><filter id="tb2"><feGaussianBlur stdDeviation="0.45"/></filter><filter id="tb2b"><feGaussianBlur stdDeviation="3"/></filter></defs><rect x="-2" y="-2" width="104" height="68" fill="url(#t2s)"/><g filter="url(#tb2b)"><ellipse cx="18" cy="12" rx="20" ry="6" fill="#b4d0cd" opacity="0.8"/><ellipse cx="60" cy="8" rx="18" ry="5" fill="#9fc2c6" opacity="0.8"/><ellipse cx="90" cy="12" rx="12" ry="7" fill="#c1dad3" opacity="0.85"/><ellipse cx="96" cy="30" rx="10" ry="8" fill="#77a6b6" opacity="0.8"/><ellipse cx="40" cy="2" rx="30" ry="5" fill="#7eabb7" opacity="0.8"/></g><g filter="url(#tb2)"><path d="M83.6,31.7 L87.1,31.4 L95.6,35.3 L100,35.6 V46 H84Z" fill="#8d8284"/><polygon points="0.0,39.5 2.8,37.4 7.1,33.9 10.6,35.3 14.9,31.4 19.8,32.4 26.2,28.5 29.7,28.9 33.3,24.6 37.5,19.7 40.4,20.4 41.8,17.6 46.0,16.9 48.9,14.0 52.4,16.9 56.7,19.7 59.5,20.4 60.2,15.4 63.7,14.7 65.2,12.3 68.7,12.3 71.5,16.9 74.4,21.1 77.9,25.4 81.4,30.3 85.0,32.4 87.8,36.7 91.4,38.8 100.0,42.4 100.0,48.0 0.0,48.0" fill="url(#t2m)"/><clipPath id="t2c"><polygon points="0.0,39.5 2.8,37.4 7.1,33.9 10.6,35.3 14.9,31.4 19.8,32.4 26.2,28.5 29.7,28.9 33.3,24.6 37.5,19.7 40.4,20.4 41.8,17.6 46.0,16.9 48.9,14.0 52.4,16.9 56.7,19.7 59.5,20.4 60.2,15.4 63.7,14.7 65.2,12.3 68.7,12.3 71.5,16.9 74.4,21.1 77.9,25.4 81.4,30.3 85.0,32.4 87.8,36.7 91.4,38.8 100.0,42.4 100.0,48.0 0.0,48.0"/></clipPath><g clip-path="url(#t2c)"><path d="M45.2,28.8 l3.6,-1.3 l0.2,6.3 l-3.6,1.0Z" fill="#e8996a" opacity="0.54"/><path d="M61.4,17.6 l2.4,-1.2 l0.7,4.0 l-2.4,0.1Z" fill="#e8996a" opacity="0.74"/><path d="M96.5,31.6 l2.8,-1.2 l0.1,4.1 l-2.8,0.0Z" fill="#f4b888" opacity="0.70"/><path d="M60.0,35.3 l2.0,-0.8 l0.6,7.1 l-2.0,0.6Z" fill="#f0a878" opacity="0.61"/><path d="M45.7,20.3 l3.8,-1.1 l0.3,10.0 l-3.8,0.3Z" fill="#f4b888" opacity="0.47"/><path d="M7.0,35.0 l2.2,-0.1 l0.0,8.9 l-2.2,0.8Z" fill="#a85c3a" opacity="0.44"/><path d="M92.7,13.6 l2.2,-0.1 l0.6,8.0 l-2.2,0.9Z" fill="#a85c3a" opacity="0.46"/><path d="M8.7,22.0 l3.7,-0.2 l0.7,8.3 l-3.7,0.0Z" fill="#f4b888" opacity="0.54"/><path d="M48.7,32.5 l1.7,-1.2 l0.4,6.6 l-1.7,0.5Z" fill="#c97a50" opacity="0.51"/><path d="M99.0,12.0 l3.4,-0.5 l0.9,9.8 l-3.4,0.3Z" fill="#e8996a" opacity="0.51"/><path d="M85.4,31.3 l1.5,-0.7 l0.0,9.9 l-1.5,0.7Z" fill="#f0a878" opacity="0.68"/><path d="M38.6,14.2 l1.7,-0.9 l0.4,7.5 l-1.7,0.5Z" fill="#f4b888" opacity="0.73"/><path d="M48.4,29.2 l3.5,-0.5 l0.2,4.3 l-3.5,0.7Z" fill="#f0a878" opacity="0.64"/><path d="M15.8,30.9 l2.6,-1.3 l0.6,7.8 l-2.6,0.5Z" fill="#a85c3a" opacity="0.39"/><path d="M3.9,40.9 l1.8,-0.6 l0.9,7.9 l-1.8,0.6Z" fill="#b9683f" opacity="0.56"/><path d="M92.9,41.3 l1.5,-1.3 l0.6,6.4 l-1.5,0.3Z" fill="#c97a50" opacity="0.72"/><path d="M20.4,12.5 l1.9,-0.1 l0.3,6.1 l-1.9,0.6Z" fill="#f4b888" opacity="0.74"/><path d="M9.2,16.2 l2.4,-1.0 l0.6,5.3 l-2.4,0.2Z" fill="#c97a50" opacity="0.36"/><path d="M1.8,39.3 l3.0,-0.9 l0.1,9.7 l-3.0,0.1Z" fill="#f4b888" opacity="0.47"/><path d="M13.7,14.2 l2.4,-1.4 l0.7,5.6 l-2.4,0.8Z" fill="#f4b888" opacity="0.67"/><path d="M91.5,22.6 l3.0,-1.4 l0.0,9.3 l-3.0,0.6Z" fill="#a85c3a" opacity="0.36"/><path d="M66.2,23.4 l1.2,-1.0 l1.0,3.5 l-1.2,1.1Z" fill="#f4b888" opacity="0.64"/><path d="M38.8,34.1 l2.7,-0.1 l0.8,6.1 l-2.7,0.0Z" fill="#e8996a" opacity="0.59"/><path d="M48.1,18.9 l3.0,-1.0 l0.5,6.5 l-3.0,1.1Z" fill="#e8996a" opacity="0.50"/><path d="M14.3,30.4 l2.5,-1.0 l0.4,8.3 l-2.5,1.1Z" fill="#b9683f" opacity="0.48"/><path d="M66.6,18.0 l2.3,-1.3 l0.4,8.6 l-2.3,0.7Z" fill="#f0a878" opacity="0.48"/><path d="M13.6,26.9 l3.4,-0.1 l1.0,8.9 l-3.4,1.0Z" fill="#c97a50" opacity="0.40"/><path d="M47.1,39.8 l3.4,-0.7 l0.3,5.7 l-3.4,1.0Z" fill="#e8996a" opacity="0.74"/><path d="M45.2,14.2 l1.3,-1.0 l0.3,9.1 l-1.3,0.4Z" fill="#f4b888" opacity="0.61"/><path d="M56.4,31.2 l2.3,-0.4 l0.1,4.3 l-2.3,0.1Z" fill="#b9683f" opacity="0.60"/><path d="M44.6,30.9 l2.9,-1.0 l0.2,8.7 l-2.9,0.6Z" fill="#f4b888" opacity="0.42"/><path d="M1.1,26.2 l3.1,-1.2 l0.5,4.3 l-3.1,1.1Z" fill="#b9683f" opacity="0.55"/><path d="M99.7,16.8 l3.4,-0.1 l0.9,7.9 l-3.4,0.9Z" fill="#f0a878" opacity="0.40"/><path d="M45.4,30.8 l3.6,-1.0 l0.5,5.6 l-3.6,1.0Z" fill="#e8996a" opacity="0.49"/><path d="M32.6,41.5 l1.5,-1.4 l0.1,9.1 l-1.5,0.3Z" fill="#c97a50" opacity="0.51"/><path d="M8.8,21.3 l3.7,-1.4 l0.9,9.5 l-3.7,0.4Z" fill="#b9683f" opacity="0.38"/><path d="M44.1,28.5 l3.2,-0.3 l0.9,6.4 l-3.2,0.5Z" fill="#f4b888" opacity="0.36"/><path d="M53.3,32.6 l3.6,-1.4 l0.5,6.3 l-3.6,0.8Z" fill="#e8996a" opacity="0.53"/><path d="M88.0,29.4 l3.0,-0.8 l0.3,8.3 l-3.0,0.9Z" fill="#a85c3a" opacity="0.61"/><path d="M52.3,37.3 l2.7,-1.4 l0.9,5.2 l-2.7,0.7Z" fill="#a85c3a" opacity="0.47"/><path d="M14.1,28.3 l1.9,-0.8 l0.5,6.5 l-1.9,0.7Z" fill="#a85c3a" opacity="0.36"/><path d="M96.9,27.5 l2.2,-0.2 l0.1,8.6 l-2.2,0.2Z" fill="#e8996a" opacity="0.72"/><path d="M45.9,39.6 l3.3,-0.7 l0.1,5.8 l-3.3,0.5Z" fill="#f0a878" opacity="0.68"/><path d="M90.1,26.3 l2.0,-0.0 l0.3,4.3 l-2.0,0.8Z" fill="#e8996a" opacity="0.74"/><path d="M3.6,16.7 l1.2,-0.5 l0.6,5.0 l-1.2,0.1Z" fill="#c97a50" opacity="0.64"/><path d="M12.3,27.3 l1.9,-1.3 l0.0,4.4 l-1.9,0.8Z" fill="#e8996a" opacity="0.68"/><path d="M61.6,28.1 l3.4,-0.8 l0.9,6.7 l-3.4,0.7Z" fill="#f0a878" opacity="0.69"/><path d="M23.3,34.2 l3.3,-0.9 l0.9,9.3 l-3.3,0.2Z" fill="#b9683f" opacity="0.66"/><path d="M19.5,14.9 l3.5,-0.4 l0.1,3.9 l-3.5,1.0Z" fill="#f4b888" opacity="0.52"/><path d="M79.0,15.8 l2.2,-0.1 l0.6,7.8 l-2.2,0.4Z" fill="#f4b888" opacity="0.68"/><path d="M36.1,33.1 l2.9,-1.2 l0.8,5.4 l-2.9,0.6Z" fill="#c97a50" opacity="0.36"/><path d="M76.2,30.4 l3.6,-0.3 l0.2,6.4 l-3.6,1.0Z" fill="#f0a878" opacity="0.75"/><path d="M92.7,14.9 l1.4,-0.1 l0.1,9.7 l-1.4,0.5Z" fill="#a85c3a" opacity="0.52"/><path d="M35.5,18.3 l2.2,-1.3 l0.2,7.4 l-2.2,0.5Z" fill="#f4b888" opacity="0.65"/><path d="M40.5,17.9 l1.6,-0.5 l0.1,6.6 l-1.6,1.0Z" fill="#f4b888" opacity="0.70"/><path d="M90.9,40.2 l2.7,-1.5 l0.8,4.3 l-2.7,0.3Z" fill="#e8996a" opacity="0.71"/><path d="M74.4,35.3 l3.3,-1.3 l0.7,5.8 l-3.3,0.9Z" fill="#b9683f" opacity="0.66"/><path d="M40.6,33.7 l1.4,-0.2 l0.9,5.4 l-1.4,1.2Z" fill="#a85c3a" opacity="0.71"/><path d="M5.0,20.2 l3.7,-1.0 l0.6,5.1 l-3.7,0.6Z" fill="#f0a878" opacity="0.51"/><path d="M100.0,31.3 l3.0,-0.0 l0.6,8.3 l-3.0,0.9Z" fill="#e8996a" opacity="0.45"/><path d="M40.2,13.5 l1.7,-0.4 l0.3,5.6 l-1.7,0.4Z" fill="#f4b888" opacity="0.57"/><path d="M41.6,27.6 l3.4,-1.2 l0.1,3.7 l-3.4,0.7Z" fill="#a85c3a" opacity="0.65"/><path d="M4.5,39.9 l1.6,-1.3 l0.5,6.3 l-1.6,0.7Z" fill="#f0a878" opacity="0.52"/><path d="M49.5,20.5 l2.2,-0.4 l0.7,5.2 l-2.2,0.7Z" fill="#e8996a" opacity="0.46"/><path d="M71.7,20.9 l1.2,-0.9 l0.4,4.7 l-1.2,0.8Z" fill="#f4b888" opacity="0.37"/><path d="M31.5,23.9 l2.7,-0.1 l0.9,8.1 l-2.7,0.5Z" fill="#b9683f" opacity="0.54"/><path d="M97.3,19.3 l2.6,-1.4 l0.1,9.6 l-2.6,1.2Z" fill="#c97a50" opacity="0.45"/><path d="M70.6,13.5 l2.3,-0.5 l0.2,3.8 l-2.3,0.4Z" fill="#f4b888" opacity="0.41"/><path d="M41.7,30.0 l2.9,-1.2 l0.5,7.8 l-2.9,1.2Z" fill="#b9683f" opacity="0.73"/><path d="M73.4,19.2 l1.5,-0.9 l0.4,9.2 l-1.5,0.3Z" fill="#e8996a" opacity="0.62"/></g><path d="M37.5,19.7 L40.4,20.4 L41.8,17.6 L46,16.9 L48.9,14 L50,26 L46,36 L40,38 L38,30Z" fill="#f0ad7c" opacity="0.35"/><path d="M60.2,15.4 L63.7,14.7 L65.2,12.3 L68.7,12.3 L68,24 L64,34 L59,30Z" fill="#f2b080" opacity="0.6"/><path d="M52.4,16.9 L56.7,19.7 L59.5,20.4 L58,32 L53,36 L50,28Z" fill="#b3643f" opacity="0.55"/><path d="M71.5,16.9 L74.4,21.1 L77.9,25.4 L81.4,30.3 L78,38 L72,34 L70,24Z" fill="#c0714b" opacity="0.6"/><path d="M7.1,33.9 L10.6,35.3 L14.9,31.4 L19.8,32.4 L26.2,28.5 L28,40 L8,42Z" fill="#eaa072" opacity="0.5"/><path d="M39,43.8 L46,38.8 L58.8,37.4 L67.3,39.5 L77.9,42.4 L88.5,39.5 L100,42.4 V66 H60 Z" fill="#978882"/><path d="M77.9,42.4 L82,52 L80,66 H100 V46 L92,47 L86,52Z" fill="#746a66" opacity="0.85"/><path d="M84,66 L90,54 L96,49 L100,48 V66Z" fill="#3b3c37" opacity="0.9"/><path d="M0,42.4 L7.1,41.3 L24.8,43.8 L39,44.1 L53.1,52.3 L67.3,57.9 L76,66 H0Z" fill="#2d2f2b"/><path d="M24,48 L34,47.5 L36,50 L26,50.5Z" fill="#5a4038" opacity="0.7"/></g></g></svg>
<div class="abs t14" style="left:357.30px;width:140px;text-align:center;top:516.20px;;letter-spacing:-0.699px;font-size:14px">IMG_2022_06_...</div>
<svg class="abs" style="left:498px;top:429px;" width="105" height="69" viewBox="-2.00 -2.80 105 69"><clipPath id="tc3"><rect width="100" height="64" rx="3.5"/></clipPath><g clip-path="url(#tc3)"><defs><linearGradient id="t3s" x1="0" y1="0" x2="0" y2="1"><stop offset="0" stop-color="#4796c9"/><stop offset="0.3" stop-color="#62a6d2"/><stop offset="0.58" stop-color="#82b4d7"/><stop offset="1" stop-color="#8ab8d8"/></linearGradient><filter id="tb3"><feGaussianBlur stdDeviation="0.45"/></filter></defs><rect x="-2" y="-2" width="104" height="68" fill="url(#t3s)"/><g filter="url(#tb3)"><polygon points="0.0,33.2 2.4,33.6 4.0,36.4 7.2,35.2 11.2,36.0 15.2,35.6 20.0,35.2 24.0,36.0 27.2,38.4 30.4,36.8 33.6,35.2 36.8,35.6 40.0,37.6 43.2,34.4 46.4,32.4 51.2,32.0 54.4,30.8 58.4,31.6 61.6,33.6 64.0,36.0 68.8,35.6 73.6,36.4 78.4,38.0 83.2,36.8 88.0,35.6 92.0,34.0 96.0,34.8 100.0,35.6 100.0,66.0 0.0,66.0" fill="#aa9d98"/><polygon points="0.0,35.8 2.4,35.7 4.0,40.1 7.2,37.0 11.2,39.3 15.2,38.4 20.0,37.0 24.0,39.2 27.2,40.1 30.4,39.8 33.6,37.0 36.8,37.5 40.0,40.6 43.2,38.6 46.4,34.4 51.2,34.3 54.4,34.4 58.4,36.2 61.6,37.0 64.0,38.9 68.8,40.3 73.6,38.1 78.4,42.3 83.2,39.3 88.0,37.7 92.0,36.0 96.0,37.4 100.0,39.8 100.0,66.0 0.0,66.0" fill="#e7eaf1"/><path d="M43.2,34.4 L46.4,32.4 L51.2,32 L54.4,30.8 L58.4,31.6 L61.6,33.6 L64,36 L62,41 L57,39.5 L51,42.5 L46,41.5 L42,38.5Z" fill="#a5958d"/><path d="M88,35.6 L92,34 L96,34.8 L100,35.6 V40.5 L94,39 L89,39.6Z" fill="#a99a93"/><path d="M0,33.2 L2.4,33.6 L4,36.4 L3,41 L0,42.5Z" fill="#a99a92"/><path d="M93.7,42.0 l2.9,-3.0 l2.9,2.2 l-2.3,1.4Z" fill="#b3a8a2" opacity="0.8"/><path d="M21.6,40.0 l1.4,-2.3 l1.4,2.8 l-1.1,1.4Z" fill="#8d8c9a" opacity="0.8"/><path d="M59.8,38.0 l2.8,-2.8 l2.8,1.9 l-2.3,1.4Z" fill="#b3a8a2" opacity="0.8"/><path d="M64.7,46.2 l2.6,-2.3 l2.6,2.0 l-2.1,1.4Z" fill="#8d8c9a" opacity="0.8"/><path d="M77.3,41.0 l2.6,-2.3 l2.6,2.5 l-2.1,1.4Z" fill="#7f8ea8" opacity="0.8"/><path d="M8.3,39.4 l3.0,-1.8 l3.0,2.7 l-2.4,1.4Z" fill="#a39690" opacity="0.8"/><path d="M79.0,39.3 l2.7,-2.6 l2.7,2.2 l-2.1,1.4Z" fill="#7f8ea8" opacity="0.8"/><path d="M53.8,39.2 l1.0,-2.4 l1.0,2.7 l-0.8,1.4Z" fill="#a39690" opacity="0.8"/><path d="M42.5,45.8 l2.7,-1.6 l2.7,2.0 l-2.1,1.4Z" fill="#8d8c9a" opacity="0.8"/><path d="M49.1,44.9 l1.7,-2.9 l1.7,1.9 l-1.3,1.4Z" fill="#7f8ea8" opacity="0.8"/><path d="M72.5,46.1 l2.3,-2.8 l2.3,2.7 l-1.9,1.4Z" fill="#7f8ea8" opacity="0.8"/><path d="M12.8,39.4 l2.0,-2.8 l2.0,2.4 l-1.6,1.4Z" fill="#7f8ea8" opacity="0.8"/><path d="M76.1,39.3 l1.3,-2.4 l1.3,2.1 l-1.0,1.4Z" fill="#a39690" opacity="0.8"/><path d="M50.8,43.0 l2.6,-2.9 l2.6,1.9 l-2.1,1.4Z" fill="#a39690" opacity="0.8"/><path d="M18.7,38.4 l1.2,-2.4 l1.2,2.6 l-1.0,1.4Z" fill="#7f8ea8" opacity="0.8"/><path d="M89.4,42.0 l2.2,-2.6 l2.2,2.3 l-1.8,1.4Z" fill="#8d8c9a" opacity="0.8"/><path d="M52.3,42.3 l2.9,-3.0 l2.9,2.7 l-2.3,1.4Z" fill="#b3a8a2" opacity="0.8"/><path d="M19.9,42.0 l1.8,-2.3 l1.8,1.9 l-1.5,1.4Z" fill="#7f8ea8" opacity="0.8"/><path d="M23.6,38.7 l2.3,-2.9 l2.3,2.0 l-1.9,1.4Z" fill="#a39690" opacity="0.8"/><path d="M70.2,43.9 l1.3,-3.1 l1.3,2.0 l-1.0,1.4Z" fill="#8d8c9a" opacity="0.8"/><path d="M93.3,41.6 l2.0,-1.8 l2.0,2.2 l-1.6,1.4Z" fill="#8d8c9a" opacity="0.8"/><path d="M50.5,41.1 l1.4,-1.7 l1.4,2.2 l-1.1,1.4Z" fill="#b3a8a2" opacity="0.8"/><path d="M28,41 L36,44 L44,46.5 L42,51 L34,51 L29,47.5Z" fill="#7189ab" opacity="0.7"/><path d="M0,48 L8,47 L18,48 L26,50.5 L33,54 L40,55 L46,52.5 L52,53.5 L60,56 L68,54.5 L76,57 L84,58 L92,55.5 L100,52 V66 H0Z" fill="#3f5d7d"/><path d="M0,48.5 L8,47.5 L18,48.5 L26,51 L31,56 L26,62 L0,63Z" fill="#8b766d" opacity="0.9"/><path d="M38,57 L48,54 L58,58 L62,66 H36Z" fill="#74686e" opacity="0.8"/><path d="M17.3,53.7 l7.5,-0.4 l-3.0,2.1Z" fill="#e4e8ef" opacity="0.48"/><path d="M5.7,48.1 l7.8,-0.2 l-3.1,1.7Z" fill="#e4e8ef" opacity="0.68"/><path d="M43.5,49.5 l8.6,0.6 l-3.4,1.6Z" fill="#e4e8ef" opacity="0.68"/><path d="M50.4,58.1 l8.1,-0.6 l-3.2,2.8Z" fill="#e4e8ef" opacity="0.50"/><path d="M40.1,56.4 l4.1,-0.0 l-1.6,1.3Z" fill="#e4e8ef" opacity="0.72"/><path d="M73.4,53.6 l9.1,-0.6 l-3.7,2.3Z" fill="#e4e8ef" opacity="0.69"/><path d="M55.7,51.8 l8.9,1.3 l-3.6,2.0Z" fill="#e4e8ef" opacity="0.72"/><path d="M5.8,55.5 l7.5,1.5 l-3.0,2.5Z" fill="#e4e8ef" opacity="0.56"/><path d="M37.0,55.0 l3.2,-0.1 l-1.3,1.5Z" fill="#e4e8ef" opacity="0.50"/><path d="M5.7,56.5 l3.9,-0.8 l-1.6,1.8Z" fill="#e4e8ef" opacity="0.80"/><path d="M7.7,51.7 l6.8,1.2 l-2.7,2.5Z" fill="#e4e8ef" opacity="0.80"/><path d="M26.7,51.2 l5.5,1.2 l-2.2,2.7Z" fill="#e4e8ef" opacity="0.51"/><path d="M16.9,48.5 l4.6,-0.0 l-1.9,2.1Z" fill="#e4e8ef" opacity="0.56"/><path d="M0.4,51.3 l5.6,0.2 l-2.2,2.7Z" fill="#e4e8ef" opacity="0.73"/><path d="M49.5,54.3 l7.7,-1.3 l-3.1,2.6Z" fill="#e4e8ef" opacity="0.76"/><path d="M84.0,57.0 l5.7,-0.3 l-2.3,1.4Z" fill="#e4e8ef" opacity="0.70"/><path d="M6.0,46.0 l4.5,-1.0 l-1.8,1.7Z" fill="#e4e8ef" opacity="0.47"/><path d="M0.0,47.3 l3.7,-0.4 l-1.5,1.2Z" fill="#e4e8ef" opacity="0.80"/><path d="M59.0,47.2 l4.8,-0.5 l-1.9,1.8Z" fill="#e4e8ef" opacity="0.50"/><path d="M81.5,59.9 l6.3,-0.0 l-2.5,1.3Z" fill="#e4e8ef" opacity="0.49"/><path d="M32.9,49.0 l8.8,-1.0 l-3.5,1.2Z" fill="#e4e8ef" opacity="0.83"/><path d="M50.7,47.2 l6.8,-1.4 l-2.7,2.0Z" fill="#e4e8ef" opacity="0.84"/><path d="M82.9,55.4 l4.8,-0.4 l-1.9,1.5Z" fill="#e4e8ef" opacity="0.76"/><path d="M51.1,56.7 l5.3,-0.8 l-2.1,2.5Z" fill="#e4e8ef" opacity="0.84"/><path d="M81.9,57.1 l8.7,0.7 l-3.5,1.6Z" fill="#e4e8ef" opacity="0.66"/><path d="M34.1,45.4 l3.2,-0.7 l-1.3,1.6Z" fill="#e4e8ef" opacity="0.73"/><path d="M0,61.5 L100,60 V66 H0Z" fill="#2c4a6a" opacity="0.8"/></g></g></svg>
<div class="abs t14" style="left:480.80px;width:140px;text-align:center;top:516.20px;;letter-spacing:-0.699px;font-size:14px">IMG_2022_06_...</div>
<svg class="abs" style="left:276px;top:561px;" width="65" height="72" viewBox="-2.20 -2.10 65 72"><path d="M0.5,0.5 H34.5 L49.3,15.3 V65.3 H0.5 Z" fill="#f8f8f9" stroke="#858585" stroke-width="1"/><path d="M1,8.6 H42.2" stroke="#dcdcdf" stroke-width="0.9"/><path d="M1,13.3 H47.0" stroke="#dcdcdf" stroke-width="0.9"/><path d="M1,18.1 H48.8" stroke="#dcdcdf" stroke-width="0.9"/><path d="M1,22.9 H48.8" stroke="#dcdcdf" stroke-width="0.9"/><path d="M1,27.6 H48.8" stroke="#dcdcdf" stroke-width="0.9"/><path d="M1,32.4 H48.8" stroke="#dcdcdf" stroke-width="0.9"/><path d="M1,37.1 H48.8" stroke="#dcdcdf" stroke-width="0.9"/><path d="M1,41.9 H48.8" stroke="#dcdcdf" stroke-width="0.9"/><path d="M1,46.6 H48.8" stroke="#dcdcdf" stroke-width="0.9"/><path d="M1,51.4 H48.8" stroke="#dcdcdf" stroke-width="0.9"/><path d="M1,56.1 H48.8" stroke="#dcdcdf" stroke-width="0.9"/><path d="M1,60.9 H48.8" stroke="#dcdcdf" stroke-width="0.9"/><path d="M6.3,1 V65" stroke="#f2a3b4" stroke-width="0.9"/><path d="M34.5,0.5 V15.3 H49.3" fill="#fdfdfd" stroke="#8e8e8e" stroke-width="1"/><path d="M35.4,14.6 H48" stroke="#c9c9c9" stroke-width="1.2"/></svg>
<div class="abs t14" style="left:233.00px;width:140px;text-align:center;top:648.20px;;letter-spacing:-0.327px;font-size:14px">New Text Doc...</div>
<svg class="abs" style="left:399px;top:561px;" width="65" height="72" viewBox="-2.40 -2.10 65 72"><path d="M0.5,0.5 H34.5 L49.3,15.3 V65.3 H0.5 Z" fill="#f8f8f9" stroke="#858585" stroke-width="1"/><path d="M34.5,0.5 V15.3 H49.3" fill="#fdfdfd" stroke="#8e8e8e" stroke-width="1"/><path d="M35.4,14.6 H48" stroke="#c9c9c9" stroke-width="1.2"/></svg>
<svg class="abs" style="left:391px;top:577px;" width="65" height="39" viewBox="-2.60 -2.20 65 39"><g transform="translate(44.2,15.8)"><circle r="10" fill="#ee7450"/><path d="M0,0 V-10 A10,10 0 0 1 10,0Z" fill="#ffc9ba"/><path d="M0,0 H-10 A10,10 0 0 1 0,-10Z" fill="#fa9b7d"/></g><rect x="0" y="0" width="33.4" height="33.6" rx="3" fill="#c64527"/><text x="16.7" y="25.8" font-family="Liberation Sans, sans-serif" font-weight="700" font-size="25" text-anchor="middle" fill="#fff">P</text></svg>
<div class="abs t14" style="left:357.20px;width:140px;text-align:center;top:648.20px;;letter-spacing:-0.067px;font-size:14px">Untitled Docum...</div>
<svg class="abs" style="left:523px;top:561px;" width="65" height="72" viewBox="-2.20 -2.10 65 72"><path d="M0.5,0.5 H34.5 L49.3,15.3 V65.3 H0.5 Z" fill="#f8f8f9" stroke="#858585" stroke-width="1"/><path d="M34.5,0.5 V15.3 H49.3" fill="#fdfdfd" stroke="#8e8e8e" stroke-width="1"/><path d="M35.4,14.6 H48" stroke="#c9c9c9" stroke-width="1.2"/></svg>
<svg class="abs" style="left:514px;top:577px;" width="65" height="39" viewBox="-2.90 -2.30 65 39"><rect x="35" y="9.0" width="18" height="1.7" fill="#41a5ee"/><rect x="35" y="13.7" width="18" height="1.7" fill="#2b7cd3"/><rect x="35" y="18.4" width="18" height="1.7" fill="#185abd"/><rect x="35" y="23.2" width="18" height="1.7" fill="#103f91"/><rect x="0" y="0" width="33.4" height="33.6" rx="3" fill="#255fc0"/><text x="16.7" y="25.8" font-family="Liberation Sans, sans-serif" font-weight="700" font-size="25" text-anchor="middle" fill="#fff">W</text></svg>
<div class="abs t14" style="left:479.50px;width:140px;text-align:center;top:648.20px;;letter-spacing:-0.232px;font-size:14px">History of Skate...</div>
<svg class="abs" style="left:276px;top:693px;" width="65" height="72" viewBox="-2.20 -2.10 65 72"><path d="M0.5,0.5 H34.5 L49.3,15.3 V65.3 H0.5 Z" fill="#f8f8f9" stroke="#858585" stroke-width="1"/><path d="M1,8.6 H42.2" stroke="#dcdcdf" stroke-width="0.9"/><path d="M1,13.3 H47.0" stroke="#dcdcdf" stroke-width="0.9"/><path d="M1,18.1 H48.8" stroke="#dcdcdf" stroke-width="0.9"/><path d="M1,22.9 H48.8" stroke="#dcdcdf" stroke-width="0.9"/><path d="M1,27.6 H48.8" stroke="#dcdcdf" stroke-width="0.9"/><path d="M1,32.4 H48.8" stroke="#dcdcdf" stroke-width="0.9"/><path d="M1,37.1 H48.8" stroke="#dcdcdf" stroke-width="0.9"/><path d="M1,41.9 H48.8" stroke="#dcdcdf" stroke-width="0.9"/><path d="M1,46.6 H48.8" stroke="#dcdcdf" stroke-width="0.9"/><path d="M1,51.4 H48.8" stroke="#dcdcdf" stroke-width="0.9"/><path d="M1,56.1 H48.8" stroke="#dcdcdf" stroke-width="0.9"/><path d="M1,60.9 H48.8" stroke="#dcdcdf" stroke-width="0.9"/><path d="M6.3,1 V65" stroke="#f2a3b4" stroke-width="0.9"/><path d="M34.5,0.5 V15.3 H49.3" fill="#fdfdfd" stroke="#8e8e8e" stroke-width="1"/><path d="M35.4,14.6 H48" stroke="#c9c9c9" stroke-width="1.2"/></svg>
<svg class="abs" style="left:399px;top:693px;" width="65" height="72" viewBox="-2.40 -2.10 65 72"><path d="M0.5,0.5 H34.5 L49.3,15.3 V65.3 H0.5 Z" fill="#f8f8f9" stroke="#858585" stroke-width="1"/><path d="M34.5,0.5 V15.3 H49.3" fill="#fdfdfd" stroke="#8e8e8e" stroke-width="1"/><path d="M35.4,14.6 H48" stroke="#c9c9c9" stroke-width="1.2"/></svg>
<svg class="abs" style="left:391px;top:709px;" width="65" height="39" viewBox="-2.60 -2.20 65 39"><rect x="35" y="10.2" width="8" height="2.6" fill="#33c481"/><rect x="35" y="15.5" width="8" height="2.6" fill="#21a366"/><rect x="35" y="20.8" width="8" height="2.6" fill="#107c41"/><rect x="45" y="10.2" width="8" height="2.6" fill="#33c481"/><rect x="45" y="15.5" width="8" height="2.6" fill="#21a366"/><rect x="45" y="20.8" width="8" height="2.6" fill="#107c41"/><rect x="0" y="0" width="33.4" height="33.6" rx="3" fill="#1e7a45"/><text x="16.7" y="25.8" font-family="Liberation Sans, sans-serif" font-weight="700" font-size="25" text-anchor="middle" fill="#fff">X</text></svg>
<svg class="abs" style="left:523px;top:693px;" width="65" height="72" viewBox="-2.20 -2.10 65 72"><path d="M0.5,0.5 H34.5 L49.3,15.3 V65.3 H0.5 Z" fill="#f8f8f9" stroke="#858585" stroke-width="1"/><path d="M34.5,0.5 V15.3 H49.3" fill="#fdfdfd" stroke="#8e8e8e" stroke-width="1"/><path d="M35.4,14.6 H48" stroke="#c9c9c9" stroke-width="1.2"/></svg>
<svg class="abs" style="left:514px;top:709px;" width="65" height="39" viewBox="-2.90 -2.30 65 39"><rect x="35" y="10.2" width="8" height="2.6" fill="#33c481"/><rect x="35" y="15.5" width="8" height="2.6" fill="#21a366"/><rect x="35" y="20.8" width="8" height="2.6" fill="#107c41"/><rect x="45" y="10.2" width="8" height="2.6" fill="#33c481"/><rect x="45" y="15.5" width="8" height="2.6" fill="#21a366"/><rect x="45" y="20.8" width="8" height="2.6" fill="#107c41"/><rect x="0" y="0" width="33.4" height="33.6" rx="3" fill="#1e7a45"/><text x="16.7" y="25.8" font-family="Liberation Sans, sans-serif" font-weight="700" font-size="25" text-anchor="middle" fill="#fff">X</text></svg>
</div></div>
<svg class="abs" style="left:338px;top:357px;" width="23" height="31" viewBox="-2.00 -2.40 23 31"><path d="M0,0 L0,22.0 L5.0,18.0 L8.3,24.2 L12.5,22.3 L9.6,16.5 L16.0,15.9 Z" fill="#fff" stroke="#111" stroke-width="1.25" stroke-linejoin="miter"/></svg>
<div class="abs" style="left:627px;top:141px;width:390px;height:590px;border-radius:8px;background:rgba(255,255,255,.32);border:1px solid rgba(0,0,20,.07);background-clip:padding-box;overflow:hidden">
<div class="abs" style="left:-628px;top:-142px;width:1025px;height:769px">
<div class="abs" style="left:622px;top:216.2px;width:110px;height:31.6px;border-radius:4px;background:rgba(0,0,0,.042)"></div>
<svg class="abs" style="left:702px;top:148px" width="24" height="24" viewBox="-12.00 -12.40 24 24" ><path d="M-2.0,-4.1 L2.1,0 L-2.0,4.1" fill="none" stroke="#555" stroke-width="1.0" stroke-linecap="round" stroke-linejoin="round" /></svg>
<svg class="abs" style="left:702px;top:184px" width="24" height="24" viewBox="-12.00 -12.40 24 24" ><path d="M-2.0,-4.1 L2.1,0 L-2.0,4.1" fill="none" stroke="#555" stroke-width="1.0" stroke-linecap="round" stroke-linejoin="round" /></svg>
<svg class="abs" style="left:702px;top:220px" width="24" height="24" viewBox="-12.00 -12.40 24 24" ><path d="M-2.0,-4.1 L2.1,0 L-2.0,4.1" fill="none" stroke="#555" stroke-width="1.0" stroke-linecap="round" stroke-linejoin="round" /></svg>
<svg class="abs" style="left:702px;top:256px" width="24" height="24" viewBox="-12.00 -12.40 24 24" ><path d="M-2.0,-4.1 L2.1,0 L-2.0,4.1" fill="none" stroke="#555" stroke-width="1.0" stroke-linecap="round" stroke-linejoin="round" /></svg>
<div class="abs t14" style="right:372.40px;top:296.30px;letter-spacing:-0.7px">IMG_2022_43</div>
<div class="abs t14" style="right:372.40px;top:332.30px;letter-spacing:-0.7px">IMG_2022_43</div>
<div class="abs t14" style="right:372.40px;top:368.30px;letter-spacing:-0.7px">IMG_2022_43</div>
<div class="abs t14" style="right:392.60px;top:404.30px;letter-spacing:0px">Document</div>
<div class="abs t14" style="right:381.40px;top:440.30px;letter-spacing:0px">Document 1</div>
<div class="abs t14" style="right:375.60px;top:476.30px;letter-spacing:0px">Presentation 1</div>
<div class="abs t14" style="right:376.80px;top:512.30px;letter-spacing:0px">Skateboards</div>
<div class="abs" style="left:736.4px;top:142px;width:1px;height:578px;background:rgba(0,0,0,.085)"></div>
<svg class="abs" style="left:754px;top:148px" width="24" height="24" viewBox="-12.80 -12.00 24 24" ><path d="M-7,-9.3 H3.2 L7,-5.5 V9.3 H-7Z" fill="#fbfbfc" stroke="#c6c6ca" stroke-width="0.8"/><path d="M3.2,-9.3 V-5.5 H7" fill="none" stroke="#c6c6ca" stroke-width="0.8"/><text x="-5.2" y="1.2" font-family="Liberation Sans, sans-serif" font-size="8.4" fill="#3a9fe2">A</text><text x="-1.9" y="5.2" font-family="Liberation Sans, sans-serif" font-size="11.4" fill="#3a9fe2">A</text></svg>
<div class="abs t14" style="left:789.30px;top:152.30px;;letter-spacing:-0.227px;font-size:14px">CrimsonText-Regular</div>
<svg class="abs" style="left:754px;top:184px" width="24" height="24" viewBox="-12.80 -12.00 24 24" ><path d="M-7,-9.3 H3.2 L7,-5.5 V9.3 H-7Z" fill="#fbfbfc" stroke="#c6c6ca" stroke-width="0.8"/><path d="M3.2,-9.3 V-5.5 H7" fill="none" stroke="#c6c6ca" stroke-width="0.8"/><rect x="1.2" y="-2.6" width="4" height="1" fill="#9cc7f2"/><rect x="1.2" y="-0.8" width="4" height="1" fill="#7db1ea"/><rect x="1.2" y="1" width="4" height="1" fill="#6b9fe0"/><rect x="-9" y="-4.4" width="8.8" height="8.8" rx="0.9" fill="#2a5fc1"/><text x="-4.6" y="2.5" font-family="Liberation Sans, sans-serif" font-weight="700" font-size="6.6" text-anchor="middle" fill="#fff">W</text></svg>
<div class="abs t14" style="left:789.30px;top:188.30px;;letter-spacing:-0.58px;font-size:14px">Diary_Jun21</div>
<svg class="abs" style="left:754px;top:220px" width="24" height="24" viewBox="-12.80 -12.00 24 24" ><path d="M-7,-9.3 H3.2 L7,-5.5 V9.3 H-7Z" fill="#fbfbfc" stroke="#c6c6ca" stroke-width="0.8"/><path d="M3.2,-9.3 V-5.5 H7" fill="none" stroke="#c6c6ca" stroke-width="0.8"/><path d="M-5.4,-6.8 H2.6 M-5.4,6.8 H5.2" stroke="#d9d9dc" stroke-width="0.8"/><rect x="-8.2" y="-3.4" width="16.2" height="8" rx="0.9" fill="#e01b30"/><text x="-0.1" y="3.0" font-family="Liberation Sans, sans-serif" font-weight="700" font-size="6.4" text-anchor="middle" fill="#fff">PDF</text></svg>
<div class="abs t14" style="left:789.30px;top:224.30px;;letter-spacing:-0.333px;font-size:14px">Diary_Jun21 Exported</div>
<svg class="abs" style="left:754px;top:256px" width="24" height="24" viewBox="-12.80 -12.00 24 24" ><path d="M-7,-9.3 H3.2 L7,-5.5 V9.3 H-7Z" fill="#fbfbfc" stroke="#c6c6ca" stroke-width="0.8"/><path d="M3.2,-9.3 V-5.5 H7" fill="none" stroke="#c6c6ca" stroke-width="0.8"/><rect x="1.2" y="-2.6" width="4" height="1" fill="#9cc7f2"/><rect x="1.2" y="-0.8" width="4" height="1" fill="#7db1ea"/><rect x="1.2" y="1" width="4" height="1" fill="#6b9fe0"/><rect x="-9" y="-4.4" width="8.8" height="8.8" rx="0.9" fill="#2a5fc1"/><text x="-4.6" y="2.5" font-family="Liberation Sans, sans-serif" font-weight="700" font-size="6.6" text-anchor="middle" fill="#fff">W</text></svg>
<div class="abs t14" style="left:789.30px;top:260.30px;;letter-spacing:-0.133px;font-size:14px">Amazon sellers newsletter</div>
<svg class="abs" style="left:628px;top:716.6px" width="390" height="16" viewBox="866 -8 390 16"><path d="M871.2,0 L878.2,-4.4 V4.4Z" fill="#7f7f84"/><path d="M1248.2,0 L1241.2,-4.4 V4.4Z" fill="#7f7f84"/><rect x="1099" y="-3.1" width="133" height="6.2" rx="3.1" fill="#8b8b90"/></svg>
</div></div>
</div>
</body>
</html>
